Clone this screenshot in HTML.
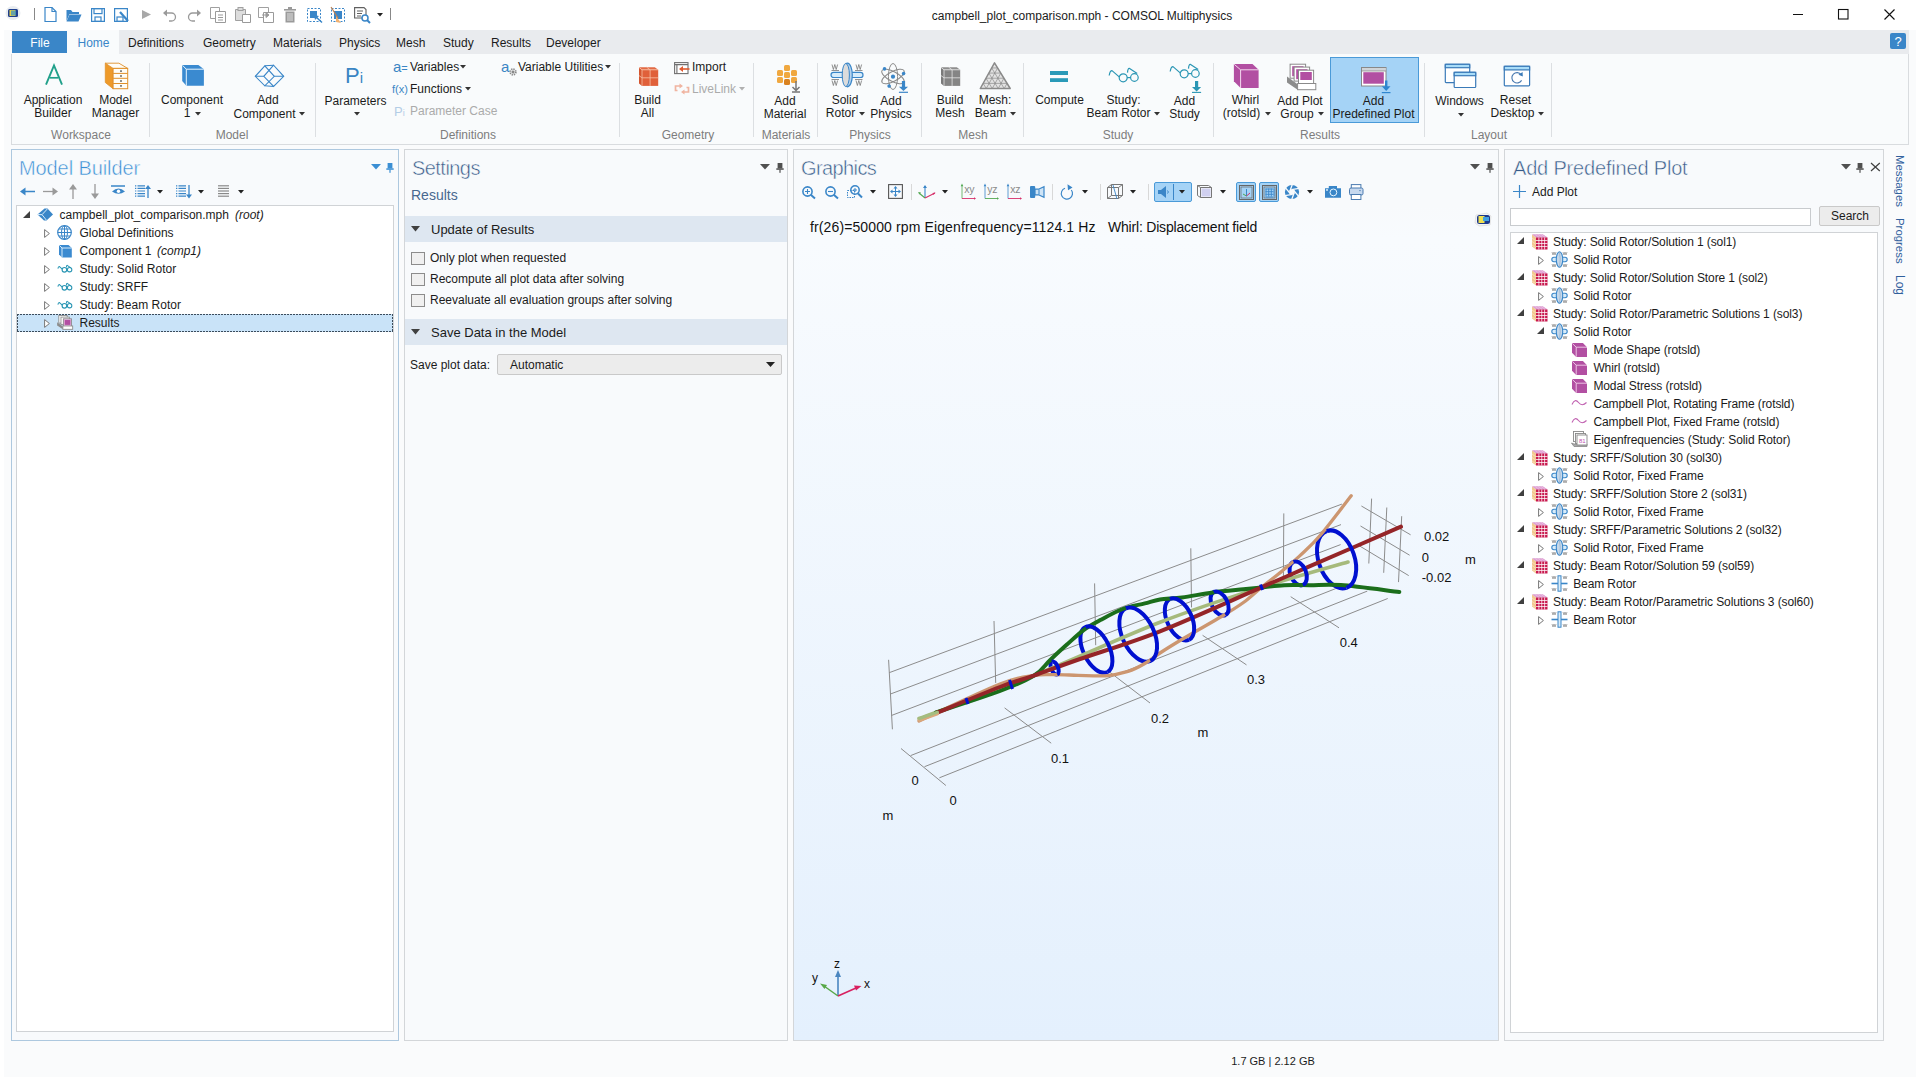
<!DOCTYPE html>
<html><head><meta charset="utf-8"><title>COMSOL</title>
<style>
html,body{margin:0;padding:0;}
body{width:1920px;height:1077px;overflow:hidden;position:relative;background:#fafbfc;font-family:"Liberation Sans",sans-serif;}
.a{position:absolute;}
.t{position:absolute;white-space:nowrap;}
svg{overflow:visible}
</style></head><body>

<div class="a" style="left:0px;top:0px;width:1920px;height:30px;background:#ffffff"></div>
<div class="t" style="left:782px;width:600px;text-align:center;top:8.0px;font-size:12px;line-height:16px;color:#1b1b1b;">campbell_plot_comparison.mph - COMSOL Multiphysics</div>
<svg class="a" style="left:1792px;top:8px" width="12" height="12" viewBox="0 0 12 12"><path d="M1 6.5H11" stroke="#111" stroke-width="1"/></svg>
<svg class="a" style="left:1838px;top:9px" width="12" height="12" viewBox="0 0 12 12"><rect x="0.5" y="0.5" width="9.5" height="9.5" fill="none" stroke="#111" stroke-width="1.1"/></svg>
<svg class="a" style="left:1883.5px;top:8.5px" width="12" height="12" viewBox="0 0 12 12"><path d="M0.5 0.5L10.5 10.5M10.5 0.5L0.5 10.5" stroke="#111" stroke-width="1.15"/></svg>
<div class="a" style="left:0px;top:27px;width:4px;height:1050px;background:#ffffff"></div>
<div class="a" style="left:1916px;top:27px;width:4px;height:1050px;background:#ffffff"></div>
<div class="a" style="left:119px;top:30px;width:1790px;height:24px;background:#e9ebee"></div>
<div class="a" style="left:12px;top:31px;width:55px;height:22px;background:#3a86c8"></div>
<div class="t" style="left:-260px;width:600px;text-align:center;top:34.5px;font-size:12px;line-height:16px;color:#ffffff;">File</div>
<div class="a" style="left:67px;top:31px;width:52px;height:23px;background:#f9fbfc"></div>
<div class="t" style="left:-206.5px;width:600px;text-align:center;top:35.0px;font-size:12px;line-height:16px;color:#3a86c8;">Home</div>
<div class="t" style="left:128px;top:35.0px;font-size:12px;line-height:16px;color:#1b1b1b;">Definitions</div>
<div class="t" style="left:203px;top:35.0px;font-size:12px;line-height:16px;color:#1b1b1b;">Geometry</div>
<div class="t" style="left:273px;top:35.0px;font-size:12px;line-height:16px;color:#1b1b1b;">Materials</div>
<div class="t" style="left:339px;top:35.0px;font-size:12px;line-height:16px;color:#1b1b1b;">Physics</div>
<div class="t" style="left:396px;top:35.0px;font-size:12px;line-height:16px;color:#1b1b1b;">Mesh</div>
<div class="t" style="left:443px;top:35.0px;font-size:12px;line-height:16px;color:#1b1b1b;">Study</div>
<div class="t" style="left:491px;top:35.0px;font-size:12px;line-height:16px;color:#1b1b1b;">Results</div>
<div class="t" style="left:546px;top:35.0px;font-size:12px;line-height:16px;color:#1b1b1b;">Developer</div>
<div class="a" style="left:1890px;top:33px;width:16px;height:16px;background:#3a86c8;border-radius:2px"></div>
<div class="t" style="left:1598px;width:600px;text-align:center;top:32.5px;font-size:13px;line-height:17px;color:#ffffff;">?</div>
<div class="a" style="left:11px;top:54px;width:1898px;height:91px;background:#f9fbfc;border:1px solid #d9dcdf;border-top:none;box-sizing:border-box"></div>
<div class="a" style="left:149px;top:63px;width:1px;height:74px;background:#dcdfe2"></div>
<div class="a" style="left:315px;top:63px;width:1px;height:74px;background:#dcdfe2"></div>
<div class="a" style="left:619px;top:63px;width:1px;height:74px;background:#dcdfe2"></div>
<div class="a" style="left:753px;top:63px;width:1px;height:74px;background:#dcdfe2"></div>
<div class="a" style="left:817px;top:63px;width:1px;height:74px;background:#dcdfe2"></div>
<div class="a" style="left:921px;top:63px;width:1px;height:74px;background:#dcdfe2"></div>
<div class="a" style="left:1023px;top:63px;width:1px;height:74px;background:#dcdfe2"></div>
<div class="a" style="left:1213px;top:63px;width:1px;height:74px;background:#dcdfe2"></div>
<div class="a" style="left:1424px;top:63px;width:1px;height:74px;background:#dcdfe2"></div>
<div class="a" style="left:1551px;top:63px;width:1px;height:74px;background:#dcdfe2"></div>
<div class="t" style="left:-219px;width:600px;text-align:center;top:127.0px;font-size:12px;line-height:16px;color:#7d7d7d;">Workspace</div>
<div class="t" style="left:-68px;width:600px;text-align:center;top:127.0px;font-size:12px;line-height:16px;color:#7d7d7d;">Model</div>
<div class="t" style="left:168px;width:600px;text-align:center;top:127.0px;font-size:12px;line-height:16px;color:#7d7d7d;">Definitions</div>
<div class="t" style="left:388px;width:600px;text-align:center;top:127.0px;font-size:12px;line-height:16px;color:#7d7d7d;">Geometry</div>
<div class="t" style="left:486px;width:600px;text-align:center;top:127.0px;font-size:12px;line-height:16px;color:#7d7d7d;">Materials</div>
<div class="t" style="left:570px;width:600px;text-align:center;top:127.0px;font-size:12px;line-height:16px;color:#7d7d7d;">Physics</div>
<div class="t" style="left:673px;width:600px;text-align:center;top:127.0px;font-size:12px;line-height:16px;color:#7d7d7d;">Mesh</div>
<div class="t" style="left:818px;width:600px;text-align:center;top:127.0px;font-size:12px;line-height:16px;color:#7d7d7d;">Study</div>
<div class="t" style="left:1020px;width:600px;text-align:center;top:127.0px;font-size:12px;line-height:16px;color:#7d7d7d;">Results</div>
<div class="t" style="left:1189px;width:600px;text-align:center;top:127.0px;font-size:12px;line-height:16px;color:#7d7d7d;">Layout</div>
<div class="a" style="left:11px;top:149px;width:388px;height:892px;background:#f8fafc;border:1px solid #adc8df;box-sizing:border-box"></div>
<div class="a" style="left:404px;top:149px;width:384px;height:892px;background:#f8fafc;border:1px solid #d3d6d9;box-sizing:border-box"></div>
<div class="a" style="left:793px;top:149px;width:706px;height:892px;background:#f8fafc;border:1px solid #d3d6d9;box-sizing:border-box"></div>
<div class="a" style="left:1504px;top:149px;width:380px;height:892px;background:#f8fafc;border:1px solid #d3d6d9;box-sizing:border-box"></div>
<div class="t" style="left:973px;width:600px;text-align:center;top:1053.5px;font-size:11px;line-height:15px;color:#1b1b1b;">1.7 GB | 2.12 GB</div>
<svg class="a" style="left:5px;top:5px" width="16" height="16" viewBox="0 0 16 16"><ellipse cx="8" cy="8" rx="7.5" ry="7" fill="#e8ecf0"/><rect x="3" y="4" width="10" height="8" rx="1.5" fill="#1f3f8f"/><rect x="4.5" y="5" width="6" height="6" fill="#e8d040"/><rect x="6" y="5.5" width="5" height="5" fill="#3090d0" opacity="0.7"/></svg>
<div class="a" style="left:34px;top:8px;width:1px;height:12px;background:#888"></div>
<svg class="a" style="left:44px;top:7px" width="13" height="15" viewBox="0 0 13 15"><path d="M1 0.5H8L12 4.5V14.5H1Z" fill="#fff" stroke="#3a86c8" stroke-width="1.2"/><path d="M8 0.5V4.5H12" fill="none" stroke="#3a86c8" stroke-width="1.2"/></svg>
<svg class="a" style="left:66px;top:9px" width="16" height="13" viewBox="0 0 16 13"><path d="M0.5 1H5L6.5 3H13V5H3.5L0.5 12Z" fill="#3a86c8"/><path d="M3.5 5.5H15.5L12.5 12.5H0.5Z" fill="#3a86c8"/></svg>
<svg class="a" style="left:91px;top:8px" width="14" height="14" viewBox="0 0 14 14"><path d="M0.6 0.6H13.4V13.4H0.6Z" fill="none" stroke="#3a86c8" stroke-width="1.2"/><rect x="3" y="0.6" width="8" height="5" fill="none" stroke="#3a86c8" stroke-width="1.2"/><rect x="4" y="9" width="6" height="4.4" fill="none" stroke="#3a86c8" stroke-width="1.2"/></svg>
<svg class="a" style="left:114px;top:8px" width="16" height="15" viewBox="0 0 16 15"><path d="M0.6 0.6H13.4V13.4H0.6Z" fill="none" stroke="#3a86c8" stroke-width="1.2"/><rect x="3" y="9" width="6" height="4.4" fill="none" stroke="#3a86c8" stroke-width="1.2"/><path d="M6 4L14 13" stroke="#3a86c8" stroke-width="2.2"/></svg>
<svg class="a" style="left:142px;top:10px" width="10" height="9" viewBox="0 0 10 9"><path d="M0 0L9 4.5L0 9Z" fill="#a8a8a8"/></svg>
<svg class="a" style="left:163px;top:9px" width="14" height="13" viewBox="0 0 14 13"><path d="M2 4H8.5A4 4 0 0 1 8.5 12H6" fill="none" stroke="#9a9a9a" stroke-width="1.3"/><path d="M0 4L4 0.5V7.5Z" fill="#9a9a9a"/></svg>
<svg class="a" style="left:187px;top:9px" width="14" height="13" viewBox="0 0 14 13"><path d="M12 4H5.5A4 4 0 0 0 5.5 12H8" fill="none" stroke="#9a9a9a" stroke-width="1.3"/><path d="M14 4L10 0.5V7.5Z" fill="#9a9a9a"/></svg>
<svg class="a" style="left:210px;top:7px" width="16" height="16" viewBox="0 0 16 16"><path d="M0.5 0.5H9.5V11.5H0.5Z" fill="#fff" stroke="#a0a0a0"/><path d="M5.5 4.5H15.5V15.5H5.5Z" fill="#fff" stroke="#9a9a9a"/><path d="M8 8H13M8 10.5H13M8 13H13" stroke="#9a9a9a"/></svg>
<svg class="a" style="left:235px;top:7px" width="16" height="16" viewBox="0 0 16 16"><path d="M0.5 2.5H10.5V13.5H0.5Z" fill="#ddd" stroke="#a0a0a0"/><rect x="3" y="0.5" width="5" height="3" fill="#ddd" stroke="#a0a0a0"/><path d="M7.5 7.5H15.5V15.5H7.5Z" fill="#fff" stroke="#9a9a9a"/></svg>
<svg class="a" style="left:258px;top:7px" width="16" height="16" viewBox="0 0 16 16"><path d="M0.5 0.5H10.5V10.5H0.5Z" fill="#fff" stroke="#a0a0a0"/><path d="M5.5 5.5H15.5V15.5H5.5Z" fill="#fff" stroke="#9a9a9a"/><path d="M4 8H10M8 5.5L11 8L8 10.5Z" stroke="#9a9a9a" fill="#9a9a9a"/></svg>
<svg class="a" style="left:284px;top:7px" width="12" height="16" viewBox="0 0 12 16"><rect x="0" y="2" width="12" height="1.6" fill="#9a9a9a"/><rect x="4" y="0" width="4" height="2" fill="#9a9a9a"/><path d="M1.5 4.5H10.5V15.5H1.5Z" fill="#9a9a9a"/><path d="M4 6V14M6 6V14M8 6V14" stroke="#e8e8e8" stroke-width="0.9"/></svg>
<svg class="a" style="left:307px;top:8px" width="16" height="15" viewBox="0 0 16 15"><rect x="0.5" y="0.5" width="13" height="13" fill="none" stroke="#3a86c8" stroke-dasharray="2 1.5"/><rect x="3" y="3" width="7" height="7" fill="#3a86c8"/><path d="M8 8L15 14.5" stroke="#3a86c8" stroke-width="1.5"/><path d="M7 7L12 8L8 12Z" fill="#3a86c8"/></svg>
<svg class="a" style="left:330px;top:7px" width="16" height="16" viewBox="0 0 16 16"><rect x="1.5" y="1.5" width="13" height="13" fill="none" stroke="#3a86c8" stroke-dasharray="2 1.5"/><rect x="4" y="4" width="8" height="8" fill="#3a86c8"/><path d="M1 0L8 11" stroke="#c08050" stroke-width="1.2"/><path d="M6 9L11 16L6 15Z" fill="#f0b070"/></svg>
<svg class="a" style="left:354px;top:7px" width="17" height="17" viewBox="0 0 17 17"><path d="M0.6 0.6H10L12 2.6V11H0.6Z" fill="#fff" stroke="#606060" stroke-width="1.1"/><path d="M3 4H9M3 6.5H8M3 9H7" stroke="#606060"/><circle cx="11" cy="11" r="3" fill="#fff" stroke="#3a86c8" stroke-width="1.5"/><path d="M13 13L16 16" stroke="#3a86c8" stroke-width="2"/></svg>
<svg class="a" style="left:376.5px;top:13px" width="6" height="4" viewBox="0 0 6 4"><path d="M0 0H6L3 3.5Z" fill="#222"/></svg>
<div class="a" style="left:390px;top:8px;width:1px;height:12px;background:#888"></div>
<svg class="a" style="left:44px;top:64px" width="20" height="22" viewBox="0 0 20 22"><path d="M2 20.6L10 1.5L18 20.6" fill="none" stroke="#21a08a" stroke-width="1.9"/><path d="M5.8 13.8H14.2" stroke="#21a08a" stroke-width="1.7"/></svg>
<div class="t" style="left:-247px;width:600px;text-align:center;top:92.0px;font-size:12px;line-height:16px;color:#1b1b1b;">Application</div>
<div class="t" style="left:-247px;width:600px;text-align:center;top:105.0px;font-size:12px;line-height:16px;color:#1b1b1b;">Builder</div>
<svg class="a" style="left:104px;top:62px" width="25" height="28" viewBox="0 0 25 28"><path d="M1.3 1.2L9.1 6.4V26.7L1.3 20.5Z" fill="#ee9a2a" stroke="#e0902a" stroke-width="0.8"/><path d="M1.3 1.2H14.9L23.7 6.4H9.1Z" fill="#fffdf6" stroke="#e0902a" stroke-width="0.9"/><rect x="9.1" y="6.4" width="14.6" height="20.3" fill="#fffdf6" stroke="#e0902a" stroke-width="1"/><path d="M9.1 11.4H23.7M9.1 16.3H23.7M9.1 21.5H23.7" stroke="#e0902a" stroke-width="1"/><g fill="#555"><rect x="16.2" y="8.3" width="1.6" height="1.6"/><rect x="16.2" y="13.2" width="1.6" height="1.6"/><rect x="16.2" y="18.2" width="1.6" height="1.6"/><rect x="16.2" y="23.1" width="1.6" height="1.6"/></g></svg>
<div class="t" style="left:-184.5px;width:600px;text-align:center;top:92.0px;font-size:12px;line-height:16px;color:#1b1b1b;">Model</div>
<div class="t" style="left:-184.5px;width:600px;text-align:center;top:105.0px;font-size:12px;line-height:16px;color:#1b1b1b;">Manager</div>
<svg class="a" style="left:181px;top:64px" width="24" height="23" viewBox="0 0 24 23"><path d="M1.2 1H17.4L22.9 5.2V21.8H5.3L1.2 17.1Z" fill="#3a8ad0"/><path d="M1.6 1.4L5.3 5.2H22.9M5.3 5.2V21.8" fill="none" stroke="#e8f6ff" stroke-width="1"/></svg>
<div class="t" style="left:-108px;width:600px;text-align:center;top:92.0px;font-size:12px;line-height:16px;color:#1b1b1b;">Component</div>
<div class="t" style="left:-113px;width:600px;text-align:center;top:105.0px;font-size:12px;line-height:16px;color:#1b1b1b;">1</div>
<svg class="a" style="left:195px;top:112px" width="6" height="4" viewBox="0 0 6 4"><path d="M0 0H6L3 3.5Z" fill="#333"/></svg>
<svg class="a" style="left:254px;top:64px" width="31" height="24" viewBox="0 0 31 24"><g fill="none" stroke="#3a86c8" stroke-width="1.1"><path d="M10.8 1.8L1.3 12.3L10.8 21.8L20.3 12.3Z"/><path d="M19.6 1.2L9.8 12.3L19.6 22.5L29.7 12.3Z"/><path d="M10.8 1.8L19.6 1.2M1.3 12.3L9.8 12.3M20.3 12.3L29.7 12.3M10.8 21.8L19.6 22.5"/></g></svg>
<div class="t" style="left:-32px;width:600px;text-align:center;top:92.0px;font-size:12px;line-height:16px;color:#1b1b1b;">Add</div>
<div class="t" style="left:-35.5px;width:600px;text-align:center;top:105.5px;font-size:12px;line-height:16px;color:#1b1b1b;">Component</div>
<svg class="a" style="left:299px;top:112px" width="6" height="4" viewBox="0 0 6 4"><path d="M0 0H6L3 3.5Z" fill="#333"/></svg>
<div class="t" style="left:54px;width:600px;text-align:center;top:63.0px;font-size:22px;line-height:26px;color:#3a85c4;">P<span style="font-size:15px">i</span></div>
<div class="t" style="left:55.5px;width:600px;text-align:center;top:92.5px;font-size:12px;line-height:16px;color:#1b1b1b;">Parameters</div>
<svg class="a" style="left:353.5px;top:112px" width="6" height="4" viewBox="0 0 6 4"><path d="M0 0H6L3 3.5Z" fill="#333"/></svg>
<div class="t" style="left:393px;top:56.5px;font-size:15px;line-height:19px;color:#3a85c4;">a<span style='font-size:11px'>=</span></div>
<div class="t" style="left:410px;top:58.5px;font-size:12px;line-height:16px;color:#1b1b1b;">Variables</div>
<svg class="a" style="left:459.5px;top:65px" width="6" height="4" viewBox="0 0 6 4"><path d="M0 0H6L3 3.5Z" fill="#333"/></svg>
<div class="t" style="left:392px;top:82.0px;font-size:11px;line-height:15px;color:#3a85c4;">f(x)</div>
<div class="t" style="left:410px;top:81.0px;font-size:12px;line-height:16px;color:#1b1b1b;">Functions</div>
<svg class="a" style="left:465px;top:87px" width="6" height="4" viewBox="0 0 6 4"><path d="M0 0H6L3 3.5Z" fill="#333"/></svg>
<div class="t" style="left:394px;top:102.5px;font-size:13px;line-height:17px;color:#b4cde6;">P<span style='font-size:9px'>i</span></div>
<div class="t" style="left:410px;top:103.0px;font-size:12px;line-height:16px;color:#ababab;">Parameter Case</div>
<div class="t" style="left:501px;top:56.5px;font-size:15px;line-height:19px;color:#3a85c4;">a</div>
<svg class="a" style="left:509px;top:68px" width="8" height="8" viewBox="0 0 8 8"><circle cx="4" cy="4" r="2.8" fill="none" stroke="#888" stroke-width="1.8" stroke-dasharray="1.3 0.9"/><circle cx="4" cy="4" r="1.5" fill="#888"/></svg>
<div class="t" style="left:518px;top:58.5px;font-size:12px;line-height:16px;color:#1b1b1b;">Variable Utilities</div>
<svg class="a" style="left:604.5px;top:65px" width="6" height="4" viewBox="0 0 6 4"><path d="M0 0H6L3 3.5Z" fill="#333"/></svg>
<svg class="a" style="left:638px;top:66px" width="21" height="21" viewBox="0 0 21 21"><path d="M1 1.6L4 3.8V19.9L1 17.4Z" fill="#d4552f"/><path d="M1 1.2H16.8L20.2 3.8H4Z" fill="#e26a44"/><rect x="4" y="3.8" width="16.2" height="16.1" fill="#e0603a"/><path d="M4 3.8H20.2M4 3.8V19.9M1 1.4L4 3.8M12.1 3.8V19.9M4 11.8H20.2M1 9.6L4 11.8M8.7 1.2L12.1 3.8" fill="none" stroke="#f8c0a4" stroke-width="0.8"/></svg>
<div class="t" style="left:347.5px;width:600px;text-align:center;top:92.0px;font-size:12px;line-height:16px;color:#1b1b1b;">Build</div>
<div class="t" style="left:347.5px;width:600px;text-align:center;top:105.0px;font-size:12px;line-height:16px;color:#1b1b1b;">All</div>
<svg class="a" style="left:674px;top:62px" width="16" height="12" viewBox="0 0 16 12"><rect x="0.6" y="0.6" width="13.4" height="11" fill="#fff" stroke="#707070" stroke-width="1.1"/><path d="M0.6 2.6H14M2.9 2.6V11.6" stroke="#707070" stroke-width="1.1"/><path d="M15.5 7H8" stroke="#e05a30" stroke-width="1.6"/><path d="M5 7L9 4V10Z" fill="#e05a30"/></svg>
<div class="t" style="left:692px;top:59.0px;font-size:12px;line-height:16px;color:#1b1b1b;">Import</div>
<svg class="a" style="left:674px;top:84px" width="16" height="10" viewBox="0 0 16 10"><path d="M6 2H1.5V6.5H3.5M9.5 8H14.5V3.5H12.5" fill="none" stroke="#f0b4a0" stroke-width="1.7"/><path d="M9 2L5.5 -0.5V4.5ZM7 8L10.5 5.5V10.5Z" fill="#f0b4a0"/></svg>
<div class="t" style="left:692px;top:81.0px;font-size:12px;line-height:16px;color:#ababab;">LiveLink</div>
<svg class="a" style="left:738.5px;top:87px" width="6" height="4" viewBox="0 0 6 4"><path d="M0 0H6L3 3.5Z" fill="#b0b0b0"/></svg>
<svg class="a" style="left:776px;top:65px" width="24" height="28" viewBox="0 0 24 28"><g fill="#f0a840"><rect x="8" y="0" width="6" height="6" rx="1.5"/><rect x="1" y="5" width="6" height="6" rx="1.5"/><rect x="8" y="7" width="6" height="6" rx="1.5"/><rect x="15" y="5" width="6" height="6" rx="1.5"/><rect x="1" y="12" width="6" height="6" rx="1.5"/><rect x="15" y="12" width="6" height="6" rx="1.5"/></g><rect x="8" y="14" width="6" height="6" rx="1.5" fill="#d98220"/><path d="M20 16V25M16.5 22L20 25.5L23.5 22M16 27H24" fill="none" stroke="#777" stroke-width="1.5"/></svg>
<div class="t" style="left:485px;width:600px;text-align:center;top:92.5px;font-size:12px;line-height:16px;color:#1b1b1b;">Add</div>
<div class="t" style="left:485px;width:600px;text-align:center;top:105.5px;font-size:12px;line-height:16px;color:#1b1b1b;">Material</div>
<svg class="a" style="left:830px;top:62px" width="34" height="27" viewBox="0 0 34 27"><g stroke="#777" stroke-width="0.8" fill="none"><path d="M2 2.5L3.4 7.5L4.8 2.5L6.2 7.5L7.6 2.5M26 2.5L27.4 7.5L28.8 2.5L30.2 7.5L31.6 2.5M2 18.5L3.4 23.5L4.8 18.5L6.2 23.5L7.6 18.5M26 18.5L27.4 23.5L28.8 18.5L30.2 23.5L31.6 18.5"/><path d="M1.5 8.5H9M25 8.5H32.5M1.5 17.5H9M25 17.5H32.5"/></g><rect x="1" y="10.3" width="32" height="5.2" rx="2.6" fill="#d8ecfa" stroke="#3a86c8" stroke-width="1.2"/><ellipse cx="17.5" cy="13" rx="4.8" ry="11.8" fill="#b8d4ee" stroke="#3a86c8" stroke-width="1.2"/><ellipse cx="15.8" cy="13" rx="3.6" ry="11.5" fill="#dcdcdc" stroke="#3a86c8" stroke-width="1"/></svg>
<div class="t" style="left:545px;width:600px;text-align:center;top:92.0px;font-size:12px;line-height:16px;color:#1b1b1b;">Solid</div>
<div class="t" style="left:540.5px;width:600px;text-align:center;top:105.0px;font-size:12px;line-height:16px;color:#1b1b1b;">Rotor</div>
<svg class="a" style="left:859px;top:111.5px" width="6" height="4" viewBox="0 0 6 4"><path d="M0 0H6L3 3.5Z" fill="#333"/></svg>
<svg class="a" style="left:879px;top:62px" width="32" height="32" viewBox="0 0 32 32"><g fill="none" stroke="#8a8a8a" stroke-width="1"><ellipse cx="14" cy="14.5" rx="12.5" ry="4.8" transform="rotate(28 14 14.5)"/><ellipse cx="14" cy="14.5" rx="12.5" ry="4.8" transform="rotate(-28 14 14.5)"/><ellipse cx="14" cy="14.5" rx="4.6" ry="13"/></g><g fill="#3a86c8"><circle cx="14" cy="14.7" r="2.1"/><circle cx="5.5" cy="6.9" r="1.8"/><circle cx="24.6" cy="11.6" r="1.8"/><circle cx="10.1" cy="24.1" r="1.8"/></g><path d="M24.5 19V25.5" stroke="#3a86c8" stroke-width="3.2"/><path d="M19.9 24.8H29L24.45 29Z" fill="#3a86c8"/><path d="M19.9 30.3H29" stroke="#3a86c8" stroke-width="1.2"/></svg>
<div class="t" style="left:591px;width:600px;text-align:center;top:92.5px;font-size:12px;line-height:16px;color:#1b1b1b;">Add</div>
<div class="t" style="left:591px;width:600px;text-align:center;top:105.5px;font-size:12px;line-height:16px;color:#1b1b1b;">Physics</div>
<svg class="a" style="left:940px;top:66px" width="21" height="21" viewBox="0 0 21 21"><path d="M1 1.6L4 3.8V19.9L1 17.4Z" fill="#7a7a7a"/><path d="M1 1.2H16.8L20.2 3.8H4Z" fill="#8e8e8e"/><rect x="4" y="3.8" width="16.2" height="16.1" fill="#858585"/><path d="M4 3.8H20.2M4 3.8V19.9M1 1.4L4 3.8M12.1 3.8V19.9M4 11.8H20.2M1 9.6L4 11.8M8.7 1.2L12.1 3.8" fill="none" stroke="#e4e4e4" stroke-width="0.8"/></svg>
<div class="t" style="left:650px;width:600px;text-align:center;top:92.0px;font-size:12px;line-height:16px;color:#1b1b1b;">Build</div>
<div class="t" style="left:650px;width:600px;text-align:center;top:105.0px;font-size:12px;line-height:16px;color:#1b1b1b;">Mesh</div>
<svg class="a" style="left:979px;top:62px" width="33" height="28" viewBox="0 0 33 28"><path d="M15.5 0.8L31.2 26.5H1.3Z" fill="#e2e2e2"/><path d="M12.66 5.94L18.64 5.94M7.28 26.50L18.64 5.94M25.22 26.50L12.66 5.94M9.82 11.08L21.78 11.08M13.26 26.50L21.78 11.08M19.24 26.50L9.82 11.08M6.98 16.22L24.92 16.22M19.24 26.50L24.92 16.22M13.26 26.50L6.98 16.22M4.14 21.36L28.06 21.36M25.22 26.50L28.06 21.36M7.28 26.50L4.14 21.36" stroke="#8a8a8a" stroke-width="0.7" fill="none"/><path d="M15.5 0.8L31.2 26.5H1.3Z" fill="none" stroke="#8a8a8a" stroke-width="1.5" stroke-linejoin="round"/></svg>
<div class="t" style="left:695px;width:600px;text-align:center;top:92.0px;font-size:12px;line-height:16px;color:#1b1b1b;">Mesh:</div>
<div class="t" style="left:690.5px;width:600px;text-align:center;top:105.0px;font-size:12px;line-height:16px;color:#1b1b1b;">Beam</div>
<svg class="a" style="left:1009.5px;top:111.5px" width="6" height="4" viewBox="0 0 6 4"><path d="M0 0H6L3 3.5Z" fill="#333"/></svg>
<svg class="a" style="left:1050px;top:71px" width="18" height="11" viewBox="0 0 18 11"><rect x="0" y="0" width="18" height="4" fill="#2a9ab8"/><rect x="0" y="7.2" width="18" height="3.8" fill="#2a9ab8"/></svg>
<div class="t" style="left:759.5px;width:600px;text-align:center;top:92.0px;font-size:12px;line-height:16px;color:#1b1b1b;">Compute</div>
<svg class="a" style="left:1108px;top:66px" width="31" height="17" viewBox="0 0 31 17"><g fill="none" stroke="#2a96b4" stroke-width="1.2" stroke-linejoin="round"><path d="M1.2 9.5Q2 4.6 4 4.6L11.2 10.9"/><circle cx="15.2" cy="11.8" r="4"/><circle cx="26.4" cy="11.5" r="3.8"/><path d="M19.1 11.6H22.6"/><path d="M19.5 6.6Q19.8 2.3 21.2 2.3L29.2 7.6"/></g></svg>
<div class="t" style="left:823.5px;width:600px;text-align:center;top:92.0px;font-size:12px;line-height:16px;color:#1b1b1b;">Study:</div>
<div class="t" style="left:818.5px;width:600px;text-align:center;top:105.0px;font-size:12px;line-height:16px;color:#1b1b1b;">Beam Rotor</div>
<svg class="a" style="left:1153.5px;top:111.5px" width="6" height="4" viewBox="0 0 6 4"><path d="M0 0H6L3 3.5Z" fill="#333"/></svg>
<svg class="a" style="left:1169px;top:62px" width="31" height="17" viewBox="0 0 31 17"><g fill="none" stroke="#2a96b4" stroke-width="1.2" stroke-linejoin="round"><path d="M1.2 9.5Q2 4.6 4 4.6L11.2 10.9"/><circle cx="15.2" cy="11.8" r="4"/><circle cx="26.4" cy="11.5" r="3.8"/><path d="M19.1 11.6H22.6"/><path d="M19.5 6.6Q19.8 2.3 21.2 2.3L29.2 7.6"/></g></svg>
<svg class="a" style="left:1191px;top:80px" width="11" height="13" viewBox="0 0 11 13"><path d="M5.6 1V7.5" stroke="#2a96b4" stroke-width="3.2"/><path d="M1 7H10.1L5.6 11.4Z" fill="#2a96b4"/><path d="M1 12.4H10.1" stroke="#2a96b4" stroke-width="1.1"/></svg>
<div class="t" style="left:884.5px;width:600px;text-align:center;top:92.5px;font-size:12px;line-height:16px;color:#1b1b1b;">Add</div>
<div class="t" style="left:884.5px;width:600px;text-align:center;top:105.5px;font-size:12px;line-height:16px;color:#1b1b1b;">Study</div>
<svg class="a" style="left:1233px;top:63px" width="27" height="26" viewBox="0 0 27 26"><path d="M0.9 1H19.5L25.6 6.8V25H7.6L0.9 18.2Z" fill="#b24fa2"/><path d="M1.2 1.3L7.6 6.8H25.6M7.6 6.8V25" fill="none" stroke="#fbe8f6" stroke-width="0.9"/></svg>
<div class="t" style="left:945.5px;width:600px;text-align:center;top:92.0px;font-size:12px;line-height:16px;color:#1b1b1b;">Whirl</div>
<div class="t" style="left:941.5px;width:600px;text-align:center;top:105.0px;font-size:12px;line-height:16px;color:#1b1b1b;">(rotsld)</div>
<svg class="a" style="left:1264.5px;top:112px" width="6" height="4" viewBox="0 0 6 4"><path d="M0 0H6L3 3.5Z" fill="#333"/></svg>
<svg class="a" style="left:1286px;top:63px" width="31" height="28" viewBox="0 0 31 28"><path d="M1 13.4L11.6 21.3V26.7L1 19.6Z" fill="#8c8c8c"/><rect x="4.1" y="1.2" width="15.5" height="14" fill="#fff" stroke="#8a8a8a" stroke-width="1"/><rect x="6.2" y="3.2" width="11.3" height="10" fill="#b24fa2"/><rect x="8.1" y="4.1" width="15.5" height="14" fill="#fff" stroke="#8a8a8a" stroke-width="1"/><rect x="10.2" y="6.2" width="11.3" height="10" fill="#b24fa2"/><rect x="12.5" y="7.2" width="15.1" height="14.2" fill="#fff" stroke="#8a8a8a" stroke-width="1"/><rect x="14.3" y="9" width="11.5" height="8" fill="#b24fa2"/><rect x="11.6" y="20.5" width="18.2" height="6.2" fill="#fff" stroke="#8a8a8a" stroke-width="1"/></svg>
<div class="t" style="left:1000px;width:600px;text-align:center;top:92.5px;font-size:12px;line-height:16px;color:#1b1b1b;">Add Plot</div>
<div class="t" style="left:997px;width:600px;text-align:center;top:105.5px;font-size:12px;line-height:16px;color:#1b1b1b;">Group</div>
<svg class="a" style="left:1317.5px;top:112px" width="6" height="4" viewBox="0 0 6 4"><path d="M0 0H6L3 3.5Z" fill="#333"/></svg>
<div class="a" style="left:1330px;top:57px;width:89px;height:66px;background:#a5d3f6;border:1px solid #4a9ad8;box-sizing:border-box"></div>
<svg class="a" style="left:1360px;top:66px" width="31" height="28" viewBox="0 0 31 28"><rect x="1.5" y="1.5" width="24.5" height="18.5" fill="#fff" stroke="#888" stroke-width="1"/><rect x="2" y="2" width="23.5" height="3" fill="#d0d4d8"/><path d="M1.5 5H26" stroke="#888" stroke-width="0.8"/><rect x="3.3" y="6.2" width="20.5" height="11.5" fill="#b24fa2"/><path d="M26.2 14.5V21.5" stroke="#2f86cf" stroke-width="2.4"/><path d="M21.8 20.2H30.5L26.2 25Z" fill="#2f86cf"/><path d="M21.8 26.6H30.5" stroke="#2f86cf" stroke-width="1.2"/></svg>
<div class="t" style="left:1073.5px;width:600px;text-align:center;top:92.5px;font-size:12px;line-height:16px;color:#1b1b1b;">Add</div>
<div class="t" style="left:1073.5px;width:600px;text-align:center;top:105.5px;font-size:12px;line-height:16px;color:#1b1b1b;">Predefined Plot</div>
<svg class="a" style="left:1444px;top:63px" width="33" height="26" viewBox="0 0 33 26"><g stroke="#3a7ab8" stroke-width="1.2"><rect x="1.3" y="1.3" width="24.4" height="18.3" rx="0.8" fill="#fff"/><rect x="1.3" y="1.3" width="24.4" height="3.4" fill="#a8dcf8"/><rect x="10.2" y="9.3" width="21.5" height="15.2" rx="0.8" fill="#fff"/><rect x="10.2" y="9.3" width="21.5" height="3.4" fill="#a8dcf8"/></g></svg>
<div class="t" style="left:1159.5px;width:600px;text-align:center;top:93.0px;font-size:12px;line-height:16px;color:#1b1b1b;">Windows</div>
<svg class="a" style="left:1457.5px;top:113px" width="6" height="4" viewBox="0 0 6 4"><path d="M0 0H6L3 3.5Z" fill="#333"/></svg>
<svg class="a" style="left:1503px;top:65px" width="28" height="23" viewBox="0 0 28 23"><g stroke="#3a7ab8" stroke-width="1.2"><rect x="1.3" y="1.3" width="25.3" height="19.5" rx="0.8" fill="#fff"/><rect x="1.3" y="1.3" width="25.3" height="3.6" fill="#a8dcf8"/></g><path d="M18.2 9.6A5.2 5.2 0 1 0 18.6 15.4" fill="none" stroke="#4a7ab0" stroke-width="1.1"/><path d="M15.5 9.8L19.6 6.9L19.8 11.6Z" fill="#3a7ab8"/></svg>
<div class="t" style="left:1215.5px;width:600px;text-align:center;top:92.0px;font-size:12px;line-height:16px;color:#1b1b1b;">Reset</div>
<div class="t" style="left:1212.5px;width:600px;text-align:center;top:105.0px;font-size:12px;line-height:16px;color:#1b1b1b;">Desktop</div>
<svg class="a" style="left:1537.5px;top:111.5px" width="6" height="4" viewBox="0 0 6 4"><path d="M0 0H6L3 3.5Z" fill="#333"/></svg>
<div class="t" style="left:19px;top:156.0px;font-size:20px;line-height:24px;color:#3b8fd4;letter-spacing:-0.1px;-webkit-text-stroke:0.5px #f8fafc">Model Builder</div>
<svg class="a" style="left:371px;top:164px" width="10" height="6" viewBox="0 0 10 6"><path d="M0 0H10L5 5.5Z" fill="#3b8fd4"/></svg>
<svg class="a" style="left:386px;top:161px" width="8" height="12" viewBox="0 0 8 12"><rect x="1.6" y="2" width="4.8" height="5.5" fill="#3b8fd4"/><rect x="0.3" y="7.3" width="7.4" height="1.5" fill="#3b8fd4"/><rect x="3.4" y="8.5" width="1.2" height="3.3" fill="#3b8fd4"/></svg>
<svg class="a" style="left:20px;top:186px" width="15" height="11" viewBox="0 0 15 11"><path d="M3 5.5H15" stroke="#3a86c8" stroke-width="1.5"/><path d="M0 5.5L5.5 1.5V9.5Z" fill="#3a86c8"/></svg>
<svg class="a" style="left:43px;top:186px" width="15" height="11" viewBox="0 0 15 11"><path d="M0 5.5H12" stroke="#9a9a9a" stroke-width="1.3"/><path d="M15 5.5L9.5 1.5V9.5Z" fill="#9a9a9a"/></svg>
<svg class="a" style="left:68px;top:184px" width="10" height="15" viewBox="0 0 10 15"><path d="M5 3V15" stroke="#9a9a9a" stroke-width="1.3"/><path d="M5 0L1 5.5H9Z" fill="#9a9a9a"/></svg>
<svg class="a" style="left:90px;top:184px" width="10" height="15" viewBox="0 0 10 15"><path d="M5 0V12" stroke="#9a9a9a" stroke-width="1.3"/><path d="M5 15L1 9.5H9Z" fill="#9a9a9a"/></svg>
<svg class="a" style="left:111px;top:185px" width="15" height="11" viewBox="0 0 15 11"><path d="M0 1H14" stroke="#3a86c8" stroke-width="1.5"/><path d="M1 6.5Q7.5 0.5 14 6.5Q7.5 11 1 6.5Z" fill="#3a86c8"/><circle cx="7.5" cy="6.3" r="1.7" fill="#fff"/></svg>
<svg class="a" style="left:134.5px;top:185px" width="16" height="14" viewBox="0 0 16 14"><path d="M0 0.8H1.3M2.5 0.8H10" stroke="#3a86c8" stroke-width="1.2"/><path d="M0 3.4000000000000004H1.3M2.5 3.4000000000000004H10" stroke="#3a86c8" stroke-width="1.2"/><path d="M0 6.0H1.3M2.5 6.0H10" stroke="#3a86c8" stroke-width="1.2"/><path d="M0 8.600000000000001H1.3M2.5 8.600000000000001H10" stroke="#3a86c8" stroke-width="1.2"/><path d="M0 11.200000000000001H1.3M2.5 11.200000000000001H10" stroke="#3a86c8" stroke-width="1.2"/><path d="M13 3V13" stroke="#3a86c8" stroke-width="1.3"/><path d="M13 0L10 4H16Z" fill="#3a86c8"/></svg>
<svg class="a" style="left:157px;top:189.5px" width="6" height="4" viewBox="0 0 6 4"><path d="M0 0H6L3 3.5Z" fill="#222"/></svg>
<svg class="a" style="left:175.5px;top:185px" width="16" height="14" viewBox="0 0 16 14"><path d="M0 0.8H1.3M2.5 0.8H10" stroke="#3a86c8" stroke-width="1.2"/><path d="M0 3.4000000000000004H1.3M2.5 3.4000000000000004H10" stroke="#3a86c8" stroke-width="1.2"/><path d="M0 6.0H1.3M2.5 6.0H10" stroke="#3a86c8" stroke-width="1.2"/><path d="M0 8.600000000000001H1.3M2.5 8.600000000000001H10" stroke="#3a86c8" stroke-width="1.2"/><path d="M0 11.200000000000001H1.3M2.5 11.200000000000001H10" stroke="#3a86c8" stroke-width="1.2"/><path d="M13 0V10" stroke="#3a86c8" stroke-width="1.3"/><path d="M13 13.5L10 9.5H16Z" fill="#3a86c8"/></svg>
<svg class="a" style="left:198px;top:189.5px" width="6" height="4" viewBox="0 0 6 4"><path d="M0 0H6L3 3.5Z" fill="#222"/></svg>
<svg class="a" style="left:218px;top:185px" width="12" height="14" viewBox="0 0 12 14"><path d="M0 0.8H11" stroke="#8a8a8a" stroke-width="1.2"/><path d="M0 3.4000000000000004H11" stroke="#8a8a8a" stroke-width="1.2"/><path d="M0 6.0H11" stroke="#8a8a8a" stroke-width="1.2"/><path d="M0 8.600000000000001H11" stroke="#8a8a8a" stroke-width="1.2"/><path d="M0 11.200000000000001H11" stroke="#8a8a8a" stroke-width="1.2"/></svg>
<svg class="a" style="left:238px;top:189.5px" width="6" height="4" viewBox="0 0 6 4"><path d="M0 0H6L3 3.5Z" fill="#222"/></svg>
<div class="a" style="left:16px;top:205px;width:378px;height:827px;background:#ffffff;border:1px solid #d0d3d6;box-sizing:border-box"></div>
<div class="a" style="left:17px;top:314px;width:376px;height:18px;background:#c9e3f8"></div>
<div class="a" style="left:17px;top:314px;width:376px;height:1px;background:repeating-linear-gradient(to right,#3c4c5c 0 2px,transparent 2px 3px)"></div>
<div class="a" style="left:17px;top:331px;width:376px;height:1px;background:repeating-linear-gradient(to right,#3c4c5c 0 2px,transparent 2px 3px)"></div>
<div class="a" style="left:17px;top:314px;width:1px;height:18px;background:repeating-linear-gradient(to bottom,#3c4c5c 0 2px,transparent 2px 3px)"></div>
<div class="a" style="left:392px;top:314px;width:1px;height:18px;background:repeating-linear-gradient(to bottom,#3c4c5c 0 2px,transparent 2px 3px)"></div>
<svg class="a" style="left:23px;top:210.5px" width="7" height="7" viewBox="0 0 7 7"><path d="M7 0V7H0Z" fill="#404040"/></svg>
<svg class="a" style="left:37px;top:208px" width="17" height="13" viewBox="0 0 17 13"><path d="M0.5 6.5L7.5 0.5H10.5L16 6.5L9.5 12.5H7Z" fill="#3a86c8"/><path d="M10.3 1L5 6.7L9.3 12M5 6.7L0.8 6.5" fill="none" stroke="#e8f6ff" stroke-width="0.9"/></svg>
<div class="t" style="left:59.5px;top:206.5px;font-size:12px;line-height:16px;color:#1b1b1b;">campbell_plot_comparison.mph</div>
<div class="t" style="left:235px;top:206.5px;font-size:12px;line-height:16px;color:#1b1b1b;font-style:italic">(root)</div>
<svg class="a" style="left:43.5px;top:228.5px" width="6" height="9" viewBox="0 0 6 9"><path d="M0.6 0.6L5.4 4.5L0.6 8.4Z" fill="#fff" stroke="#777" stroke-width="1"/></svg>
<svg class="a" style="left:57px;top:225.0px" width="15" height="15" viewBox="0 0 15 15"><circle cx="7.5" cy="7.5" r="6.8" fill="#fff" stroke="#3a86c8" stroke-width="1.2"/><ellipse cx="7.5" cy="7.5" rx="3" ry="6.8" fill="none" stroke="#3a86c8" stroke-width="1"/><path d="M7.5 0.7V14.3M0.7 7.5H14.3M1.8 4H13.2M1.8 11H13.2" stroke="#3a86c8" stroke-width="1"/></svg>
<div class="t" style="left:79.5px;top:224.5px;font-size:12px;line-height:16px;color:#1b1b1b;">Global Definitions</div>
<svg class="a" style="left:43.5px;top:246.5px" width="6" height="9" viewBox="0 0 6 9"><path d="M0.6 0.6L5.4 4.5L0.6 8.4Z" fill="#fff" stroke="#777" stroke-width="1"/></svg>
<svg class="a" style="left:57px;top:243.0px" width="14" height="15" viewBox="0 0 14 15"><path d="M2 2H11.5L14.8 5V14.6H5L2 11.5Z" fill="#3a8ad0"/><path d="M2.3 2.3L5 5H14.8M5 5V14.6" fill="none" stroke="#e8f6ff" stroke-width="0.9"/></svg>
<div class="t" style="left:79.5px;top:242.5px;font-size:12px;line-height:16px;color:#1b1b1b;">Component 1</div>
<div class="t" style="left:157px;top:242.5px;font-size:12px;line-height:16px;color:#1b1b1b;font-style:italic">(comp1)</div>
<svg class="a" style="left:43.5px;top:264.5px" width="6" height="9" viewBox="0 0 6 9"><path d="M0.6 0.6L5.4 4.5L0.6 8.4Z" fill="#fff" stroke="#777" stroke-width="1"/></svg>
<svg class="a" style="left:57px;top:264.0px" width="17" height="9" viewBox="0 0 17 9"><g transform="translate(0.35 0.3) scale(0.464)"><g fill="none" stroke="#2a96b4" stroke-width="2.3" stroke-linejoin="round"><path d="M1.2 9.5Q2 4.6 4 4.6L11.2 10.9"/><circle cx="15.2" cy="11.8" r="5"/><circle cx="26.4" cy="11.5" r="4.8"/><path d="M19.1 11.6H22.6"/><path d="M19.5 6.6Q19.8 2.3 21.2 2.3L29.2 7.6"/></g></g></svg>
<div class="t" style="left:79.5px;top:260.5px;font-size:12px;line-height:16px;color:#1b1b1b;">Study: Solid Rotor</div>
<svg class="a" style="left:43.5px;top:282.5px" width="6" height="9" viewBox="0 0 6 9"><path d="M0.6 0.6L5.4 4.5L0.6 8.4Z" fill="#fff" stroke="#777" stroke-width="1"/></svg>
<svg class="a" style="left:57px;top:282.0px" width="17" height="9" viewBox="0 0 17 9"><g transform="translate(0.35 0.3) scale(0.464)"><g fill="none" stroke="#2a96b4" stroke-width="2.3" stroke-linejoin="round"><path d="M1.2 9.5Q2 4.6 4 4.6L11.2 10.9"/><circle cx="15.2" cy="11.8" r="5"/><circle cx="26.4" cy="11.5" r="4.8"/><path d="M19.1 11.6H22.6"/><path d="M19.5 6.6Q19.8 2.3 21.2 2.3L29.2 7.6"/></g></g></svg>
<div class="t" style="left:79.5px;top:278.5px;font-size:12px;line-height:16px;color:#1b1b1b;">Study: SRFF</div>
<svg class="a" style="left:43.5px;top:300.5px" width="6" height="9" viewBox="0 0 6 9"><path d="M0.6 0.6L5.4 4.5L0.6 8.4Z" fill="#fff" stroke="#777" stroke-width="1"/></svg>
<svg class="a" style="left:57px;top:300.0px" width="17" height="9" viewBox="0 0 17 9"><g transform="translate(0.35 0.3) scale(0.464)"><g fill="none" stroke="#2a96b4" stroke-width="2.3" stroke-linejoin="round"><path d="M1.2 9.5Q2 4.6 4 4.6L11.2 10.9"/><circle cx="15.2" cy="11.8" r="5"/><circle cx="26.4" cy="11.5" r="4.8"/><path d="M19.1 11.6H22.6"/><path d="M19.5 6.6Q19.8 2.3 21.2 2.3L29.2 7.6"/></g></g></svg>
<div class="t" style="left:79.5px;top:296.5px;font-size:12px;line-height:16px;color:#1b1b1b;">Study: Beam Rotor</div>
<svg class="a" style="left:43.5px;top:318.5px" width="6" height="9" viewBox="0 0 6 9"><path d="M0.6 0.6L5.4 4.5L0.6 8.4Z" fill="#fff" stroke="#777" stroke-width="1"/></svg>
<svg class="a" style="left:57px;top:315.0px" width="17" height="15" viewBox="0 0 17 15"><g transform="translate(-0.4 -0.1) scale(0.54)"><path d="M1 13.4L11.6 21.3V26.7L1 19.6Z" fill="#8c8c8c"/><rect x="4.1" y="1.2" width="15.5" height="14" fill="#fff" stroke="#8a8a8a" stroke-width="1.6"/><rect x="8.1" y="4.1" width="15.5" height="14" fill="#fff" stroke="#8a8a8a" stroke-width="1.6"/><rect x="12.5" y="7.2" width="15.1" height="14.2" fill="#e8b8e0" stroke="#8a8a8a" stroke-width="1.6"/><rect x="15" y="9.5" width="10.5" height="9" fill="#b24fa2"/><rect x="11.6" y="20.5" width="18.2" height="6.2" fill="#fff" stroke="#8a8a8a" stroke-width="1.6"/></g></svg>
<div class="t" style="left:79.5px;top:314.5px;font-size:12px;line-height:16px;color:#1b1b1b;">Results</div>
<div class="t" style="left:412px;top:156.0px;font-size:20px;line-height:24px;color:#365a88;letter-spacing:-0.55px;-webkit-text-stroke:0.5px #f8fafc">Settings</div>
<svg class="a" style="left:760px;top:164px" width="10" height="6" viewBox="0 0 10 6"><path d="M0 0H10L5 5.5Z" fill="#505050"/></svg>
<svg class="a" style="left:775.5px;top:161px" width="8" height="12" viewBox="0 0 8 12"><rect x="1.6" y="2" width="4.8" height="5.5" fill="#505050"/><rect x="0.3" y="7.3" width="7.4" height="1.5" fill="#505050"/><rect x="3.4" y="8.5" width="1.2" height="3.3" fill="#505050"/></svg>
<div class="t" style="left:411px;top:185.5px;font-size:14px;line-height:18px;color:#48688f;">Results</div>
<div class="a" style="left:405px;top:216px;width:382px;height:26px;background:#dee7f1"></div>
<svg class="a" style="left:410.5px;top:226px" width="9" height="6" viewBox="0 0 9 6"><path d="M0 0H9L4.5 5.5Z" fill="#404040"/></svg>
<div class="t" style="left:431px;top:220.5px;font-size:13px;line-height:17px;color:#1b1b1b;">Update of Results</div>
<div class="a" style="left:411px;top:252.0px;width:14px;height:13px;background:#f0f0f0;border:1px solid #8c8c8c;box-sizing:border-box"></div>
<div class="t" style="left:430px;top:250.0px;font-size:12px;line-height:16px;color:#1b1b1b;">Only plot when requested</div>
<div class="a" style="left:411px;top:273.0px;width:14px;height:13px;background:#f0f0f0;border:1px solid #8c8c8c;box-sizing:border-box"></div>
<div class="t" style="left:430px;top:271.0px;font-size:12px;line-height:16px;color:#1b1b1b;">Recompute all plot data after solving</div>
<div class="a" style="left:411px;top:294.0px;width:14px;height:13px;background:#f0f0f0;border:1px solid #8c8c8c;box-sizing:border-box"></div>
<div class="t" style="left:430px;top:292.0px;font-size:12px;line-height:16px;color:#1b1b1b;">Reevaluate all evaluation groups after solving</div>
<div class="a" style="left:405px;top:319px;width:382px;height:26px;background:#dee7f1"></div>
<svg class="a" style="left:410.5px;top:329px" width="9" height="6" viewBox="0 0 9 6"><path d="M0 0H9L4.5 5.5Z" fill="#404040"/></svg>
<div class="t" style="left:431px;top:323.5px;font-size:13px;line-height:17px;color:#1b1b1b;">Save Data in the Model</div>
<div class="t" style="left:410px;top:357.0px;font-size:12px;line-height:16px;color:#1b1b1b;">Save plot data:</div>
<div class="a" style="left:497px;top:354px;width:285px;height:21px;background:#ececec;border:1px solid #c9c9c9;border-radius:2px;box-sizing:border-box"></div>
<div class="t" style="left:510px;top:356.5px;font-size:12px;line-height:16px;color:#1b1b1b;">Automatic</div>
<svg class="a" style="left:766px;top:362px" width="9" height="5" viewBox="0 0 9 5"><path d="M0 0H9L4.5 5Z" fill="#222"/></svg>
<div class="a" style="left:794px;top:150px;width:704px;height:890px;background:linear-gradient(to bottom,#f8fafc 0px,#f8fafc 55px,#f8fbfe 90px,#e4f0fd 100%)"></div>
<div class="t" style="left:801px;top:156.0px;font-size:20px;line-height:24px;color:#365a88;letter-spacing:-0.6px;-webkit-text-stroke:0.5px #f8fafc">Graphics</div>
<svg class="a" style="left:1470px;top:164px" width="10" height="6" viewBox="0 0 10 6"><path d="M0 0H10L5 5.5Z" fill="#505050"/></svg>
<svg class="a" style="left:1485.5px;top:161px" width="8" height="12" viewBox="0 0 8 12"><rect x="1.6" y="2" width="4.8" height="5.5" fill="#505050"/><rect x="0.3" y="7.3" width="7.4" height="1.5" fill="#505050"/><rect x="3.4" y="8.5" width="1.2" height="3.3" fill="#505050"/></svg>
<svg class="a" style="left:802px;top:186px" width="14" height="13" viewBox="0 0 14 13"><circle cx="5.5" cy="5.5" r="4.6" fill="none" stroke="#3a86c8" stroke-width="1.6"/><path d="M3 5.5H8M5.5 3V8" stroke="#3a86c8" stroke-width="1.1"/><path d="M8.8 8.8L13 12.6" stroke="#3a86c8" stroke-width="2"/></svg>
<svg class="a" style="left:825px;top:186px" width="14" height="13" viewBox="0 0 14 13"><circle cx="5.5" cy="5.5" r="4.6" fill="none" stroke="#3a86c8" stroke-width="1.6"/><path d="M3 5.5H8" stroke="#3a86c8" stroke-width="1.1"/><path d="M8.8 8.8L13 12.6" stroke="#3a86c8" stroke-width="2"/></svg>
<svg class="a" style="left:847px;top:185px" width="16" height="14" viewBox="0 0 16 14"><rect x="0.5" y="5.5" width="7" height="7" fill="none" stroke="#3a86c8" stroke-dasharray="1.5 1"/><circle cx="8" cy="5" r="4.2" fill="none" stroke="#3a86c8" stroke-width="1.5"/><path d="M6 5H10M8 3V7" stroke="#3a86c8" stroke-width="1"/><path d="M11 8.5L15 12.5" stroke="#3a86c8" stroke-width="2"/></svg>
<svg class="a" style="left:869.5px;top:190px" width="6" height="4" viewBox="0 0 6 4"><path d="M0 0H6L3 3.5Z" fill="#222"/></svg>
<svg class="a" style="left:888px;top:184px" width="15" height="15" viewBox="0 0 15 15"><rect x="0.6" y="0.6" width="13.8" height="13.8" fill="none" stroke="#555" stroke-width="1.1"/><path d="M7.5 3V12M3 7.5H12" stroke="#3a86c8" stroke-width="1"/><path d="M7.5 2L5.5 4.5H9.5ZM7.5 13L5.5 10.5H9.5ZM2 7.5L4.5 5.5V9.5ZM13 7.5L10.5 5.5V9.5Z" fill="#3a86c8"/></svg>
<div class="a" style="left:911px;top:184px;width:1px;height:16px;background:#d8d8d8"></div>
<svg class="a" style="left:918px;top:185px" width="18" height="14" viewBox="0 0 18 14"><path d="M7 13V1" stroke="#3a86c8" stroke-width="1.1"/><path d="M7 0L5 3H9Z" fill="#3a86c8"/><path d="M7 13L1 8" stroke="#52a852" stroke-width="1.1"/><path d="M0 7L3 7.5L1.5 9.5Z" fill="#52a852"/><path d="M7 13L17 8" stroke="#d6306a" stroke-width="1.1"/><path d="M17.5 7.5L14.5 8L15.5 10Z" fill="#d6306a"/></svg>
<svg class="a" style="left:941.5px;top:190px" width="6" height="4" viewBox="0 0 6 4"><path d="M0 0H6L3 3.5Z" fill="#222"/></svg>
<svg class="a" style="left:960.5px;top:184px" width="15" height="16" viewBox="0 0 15 16"><path d="M1 1V14.5" fill="none" stroke="#52a852" stroke-width="0.8"/><path d="M1 -0.5L-0.3 2.2H2.3Z" fill="#52a852"/><path d="M1 14.5H13.5" stroke="#d6306a" stroke-width="0.9"/><path d="M15 14.5L13 13.3V15.7Z" fill="#d6306a"/><text x="3.2" y="9.3" font-size="10.5" fill="#8a8a8a" font-family="Liberation Sans" letter-spacing="-0.3">xy</text></svg>
<svg class="a" style="left:983.5px;top:184px" width="15" height="16" viewBox="0 0 15 16"><path d="M1 1V14.5" fill="none" stroke="#3a86c8" stroke-width="0.8"/><path d="M1 -0.5L-0.3 2.2H2.3Z" fill="#3a86c8"/><path d="M1 14.5H13.5" stroke="#52a852" stroke-width="0.9"/><path d="M15 14.5L13 13.3V15.7Z" fill="#52a852"/><text x="3.2" y="9.3" font-size="10.5" fill="#8a8a8a" font-family="Liberation Sans" letter-spacing="-0.3">yz</text></svg>
<svg class="a" style="left:1006.5px;top:184px" width="15" height="16" viewBox="0 0 15 16"><path d="M1 1V14.5" fill="none" stroke="#3a86c8" stroke-width="0.8"/><path d="M1 -0.5L-0.3 2.2H2.3Z" fill="#3a86c8"/><path d="M1 14.5H13.5" stroke="#d6306a" stroke-width="0.9"/><path d="M15 14.5L13 13.3V15.7Z" fill="#d6306a"/><text x="3.2" y="9.3" font-size="10.5" fill="#8a8a8a" font-family="Liberation Sans" letter-spacing="-0.3">xz</text></svg>
<svg class="a" style="left:1030px;top:186px" width="15" height="12" viewBox="0 0 15 12"><rect x="0" y="0" width="5.2" height="12" rx="1" fill="#3a86c8"/><path d="M5 3.2H8.5L14 0.6V11.4L8.5 8.8H5Z" fill="#cfe4f6" stroke="#3a86c8" stroke-width="1.2"/><path d="M9 3.5V8.5" stroke="#3a86c8" stroke-width="1"/></svg>
<div class="a" style="left:1052px;top:184px;width:1px;height:16px;background:#d8d8d8"></div>
<svg class="a" style="left:1060px;top:184px" width="14" height="16" viewBox="0 0 14 16"><path d="M11.3 6A5.6 5.6 0 1 1 5 4.2" fill="none" stroke="#3a86c8" stroke-width="1.2"/><path d="M7.5 0.3L12.5 3.5L8 6.2Z" fill="#3a86c8"/></svg>
<svg class="a" style="left:1081.5px;top:190px" width="6" height="4" viewBox="0 0 6 4"><path d="M0 0H6L3 3.5Z" fill="#222"/></svg>
<div class="a" style="left:1100px;top:184px;width:1px;height:16px;background:#d8d8d8"></div>
<svg class="a" style="left:1107px;top:184px" width="17" height="16" viewBox="0 0 17 16"><g fill="none" stroke="#777" stroke-width="1"><path d="M0.5 3.5H11.5V14.5H0.5Z"/><path d="M4.5 0.5H15.5V11.5H4.5Z"/><path d="M0.5 3.5L4.5 0.5M11.5 3.5L15.5 0.5M11.5 14.5L15.5 11.5M0.5 14.5L4.5 11.5"/></g><path d="M6 1L10 15" stroke="#3a86c8" stroke-width="0.9"/></svg>
<svg class="a" style="left:1129.5px;top:190px" width="6" height="4" viewBox="0 0 6 4"><path d="M0 0H6L3 3.5Z" fill="#222"/></svg>
<div class="a" style="left:1148px;top:184px;width:1px;height:16px;background:#d8d8d8"></div>
<div class="a" style="left:1154px;top:182px;width:38px;height:20px;background:#a5d3f6;border:1px solid #4a9ad8;border-radius:2px;box-sizing:border-box"></div>
<div class="a" style="left:1173px;top:184px;width:1px;height:16px;background:#3a86c8"></div>
<svg class="a" style="left:1158px;top:186px" width="12" height="12" viewBox="0 0 12 12"><path d="M0 4H3L8 0V12L3 8H0Z" fill="#3a86c8"/><path d="M9.5 4.5A2 2 0 0 1 9.5 7.5" fill="none" stroke="#3a86c8" stroke-width="1"/></svg>
<svg class="a" style="left:1178.5px;top:190px" width="6" height="4" viewBox="0 0 6 4"><path d="M0 0H6L3 3.5Z" fill="#222"/></svg>
<svg class="a" style="left:1197px;top:185px" width="16" height="13" viewBox="0 0 16 13"><g fill="none" stroke="#777" stroke-width="1"><path d="M3.5 2.5H14.5V12.5H3.5Z"/><path d="M0.5 0.5H11.5M0.5 0.5V10.5L3.5 12.5M0.5 0.5L3.5 2.5M11.5 0.5L14.5 2.5"/></g><rect x="4.5" y="3.5" width="9" height="8" fill="#d0d0f0"/></svg>
<svg class="a" style="left:1219.5px;top:190px" width="6" height="4" viewBox="0 0 6 4"><path d="M0 0H6L3 3.5Z" fill="#222"/></svg>
<div class="a" style="left:1236px;top:182px;width:20px;height:20px;background:#a5d3f6;border:1px solid #4a9ad8;border-radius:2px;box-sizing:border-box"></div>
<svg class="a" style="left:1238.5px;top:184.5px" width="15" height="15" viewBox="0 0 15 15"><rect x="0.5" y="0.5" width="14" height="14" fill="none" stroke="#666"/><rect x="2" y="2" width="11" height="11" fill="none" stroke="#666" stroke-width="0.7"/><path d="M7.5 11V4" stroke="#3a86c8"/><path d="M7.5 11L4 9" stroke="#52a852"/><path d="M7.5 11L11 8" stroke="#d6306a"/></svg>
<div class="a" style="left:1259px;top:182px;width:20px;height:20px;background:#a5d3f6;border:1px solid #4a9ad8;border-radius:2px;box-sizing:border-box"></div>
<svg class="a" style="left:1261.5px;top:184.5px" width="15" height="15" viewBox="0 0 15 15"><rect x="0.5" y="0.5" width="14" height="14" fill="none" stroke="#666"/><rect x="2" y="2" width="11" height="11" fill="none" stroke="#666" stroke-width="0.7"/><path d="M4 3.5V11.5M6.7 3.5V11.5M9.3 3.5V11.5M12 3.5V11.5M3.5 4H11.5M3.5 6.7H11.5M3.5 9.3H11.5M3.5 12H11.5" stroke="#3a86c8" stroke-width="0.9"/></svg>
<svg class="a" style="left:1284px;top:184px" width="16" height="16" viewBox="0 0 16 16"><circle cx="8" cy="8" r="7.1" fill="#3a86c8"/><path d="M10.16 8.79L7.08 17.24M8.40 10.27L-0.46 11.83M6.24 9.48L0.45 2.58M5.84 7.21L8.92 -1.24M7.60 5.73L16.46 4.17M9.76 6.52L15.55 13.42" stroke="#f8fafc" stroke-width="1.3"/><circle cx="8" cy="8" r="2.8" fill="#f8fafc"/></svg>
<svg class="a" style="left:1306.5px;top:190px" width="6" height="4" viewBox="0 0 6 4"><path d="M0 0H6L3 3.5Z" fill="#222"/></svg>
<svg class="a" style="left:1325px;top:186px" width="17" height="12" viewBox="0 0 17 12"><path d="M0 2.2H3.8L3.8 0.1H12V2.2H16V11.8H0Z" fill="#3a86c8"/><circle cx="8.4" cy="6.4" r="3.4" fill="none" stroke="#e8f6ff" stroke-width="1"/><rect x="1.2" y="3.1" width="1.6" height="1.7" fill="#e8f6ff"/></svg>
<svg class="a" style="left:1349px;top:184px" width="15" height="16" viewBox="0 0 15 16"><rect x="2.3" y="0.6" width="9.6" height="4.2" fill="#fff" stroke="#4a7ab0" stroke-width="1"/><rect x="0.5" y="4" width="13.5" height="7" rx="1.5" fill="#c6d8ee" stroke="#4a7ab0" stroke-width="1"/><rect x="2.3" y="10.5" width="9.6" height="5" fill="#fff" stroke="#4a7ab0" stroke-width="1"/><path d="M10.2 6.6H11.8" stroke="#4a7ab0" stroke-width="0.8"/></svg>
<div class="t" style="left:810px;top:217.5px;font-size:14px;line-height:18px;color:#111;letter-spacing:0.12px">fr(26)=50000 rpm Eigenfrequency=1124.1 Hz</div>
<div class="t" style="left:1108px;top:217.5px;font-size:14px;line-height:18px;color:#111;letter-spacing:-0.2px">Whirl: Displacement field</div>
<svg class="a" style="left:1474px;top:212px" width="18" height="15" viewBox="0 0 18 15"><path d="M2 3L13 1L17 4L16 13L5 14L1 11Z" fill="#f4f4f4" stroke="#ddd" stroke-width="0.8"/><rect x="3" y="3" width="13" height="9" rx="2.5" fill="#1c3a8e"/><rect x="4.5" y="4" width="6" height="7" fill="#f0e050"/><rect x="9" y="5" width="6" height="4" fill="#40a0e0"/></svg>
<svg class="a" style="left:0;top:0" width="1920" height="1077" viewBox="0 0 1920 1077">
<g stroke="#8c8c8c" stroke-width="1"><line x1="889.2" y1="672.7" x2="1341.9" y2="504.1"/><line x1="890.5" y1="694.0" x2="1341.0" y2="524.6"/><line x1="891.4" y1="715.5" x2="1340.6" y2="544.6"/><line x1="888.6" y1="659.8" x2="892.4" y2="729.3"/><line x1="994.0" y1="621.0" x2="995.7" y2="682.9"/><line x1="1094.6" y1="583.4" x2="1095.7" y2="645.2"/><line x1="1190.8" y1="548.3" x2="1191.5" y2="607.4"/><line x1="1283.8" y1="513.4" x2="1283.4" y2="576.5"/><line x1="910.6" y1="755.6" x2="1335.7" y2="588.6"/><line x1="924.5" y1="766.7" x2="1367.3" y2="591.1"/><line x1="939.4" y1="777.8" x2="1387.7" y2="598.5"/><line x1="901.0" y1="748.5" x2="945.9" y2="785.5"/><line x1="1004.6" y1="707.9" x2="1051.2" y2="743.2"/><line x1="1107.0" y1="670.0" x2="1150.0" y2="703.0"/><line x1="1202.6" y1="635.3" x2="1246.5" y2="664.9"/><line x1="1290.7" y1="596.7" x2="1339.0" y2="627.8"/><line x1="1361.4" y1="506.0" x2="1410.6" y2="534.8"/><line x1="1360.5" y1="526.0" x2="1409.6" y2="555.2"/><line x1="1359.5" y1="545.9" x2="1408.7" y2="575.6"/><line x1="1371.6" y1="498.6" x2="1368.8" y2="563.5"/><line x1="1386.8" y1="507.5" x2="1383.7" y2="572.8"/><line x1="1401.7" y1="516.2" x2="1398.5" y2="582.1"/></g>
<g fill="none" stroke="#0010d0" stroke-width="4"><path d="M1051.98 661.51A3.5 7 -22 0 0 1057.22 674.49"/><path d="M1085.44 627.13A13 25 -26 0 0 1107.36 672.07"/><path d="M1125.94 608.32A16 29 -25 0 0 1150.46 660.88"/><path d="M1169.99 599.01A12.5 22.5 -25 0 0 1189.01 639.79"/><path d="M1213.70 591.92A8 13 -27 0 0 1225.50 615.08"/><path d="M1293.52 561.81A8 12.5 -22 0 0 1302.88 584.99"/><path d="M1326.83 531.03A18 30 -19 0 0 1346.37 587.77"/></g>
<g fill="none" stroke-linecap="round">
<path d="M919.0 718.5 C938.2 711.3 994.3 691.3 1034.5 675.3 C1074.7 659.3 1122.2 636.9 1160.0 622.3 C1197.8 607.6 1230.1 597.4 1261.4 587.4 C1292.7 577.4 1333.6 566.2 1348.0 562.0" stroke="#a6ba7c" stroke-width="3.6"/>
<path d="M919.0 721.0 C932.5 714.8 980.8 691.6 1000.0 684.0 C1019.2 676.4 1025.2 676.8 1034.5 675.3 C1043.8 673.8 1048.5 674.7 1055.7 674.7 C1063.0 674.7 1069.7 675.1 1078.0 675.3 C1086.3 675.5 1097.5 676.4 1105.8 675.8 C1114.1 675.1 1121.5 673.4 1128.0 671.4 C1134.5 669.4 1139.5 666.6 1144.8 663.5 C1150.1 660.4 1153.6 657.2 1160.0 653.0 C1166.4 648.8 1173.0 644.7 1183.4 638.5 C1193.8 632.3 1212.4 622.0 1222.4 616.0 C1232.4 610.0 1236.9 607.3 1243.4 602.5 C1249.9 597.7 1254.9 592.7 1261.4 587.4 C1267.9 582.1 1275.8 576.2 1282.2 570.9 C1288.6 565.6 1293.7 561.5 1300.0 555.6 C1306.3 549.7 1311.8 545.3 1320.3 535.3 C1328.8 525.3 1346.0 502.4 1351.2 495.8" stroke="#cc9670" stroke-width="3.3"/>
<path d="M936.0 712.5 C946.7 708.9 983.6 697.2 1000.0 691.0 C1016.4 684.8 1026.2 680.4 1034.5 675.3 C1042.8 670.2 1044.6 665.3 1050.0 660.2 C1055.4 655.1 1061.3 649.6 1066.9 644.6 C1072.5 639.6 1078.0 634.2 1083.6 630.1 C1089.2 626.0 1093.8 623.6 1100.3 620.1 C1106.8 616.6 1115.2 611.8 1122.6 609.0 C1130.0 606.2 1138.6 605.0 1144.8 603.4 C1151.0 601.8 1153.8 600.5 1160.0 599.5 C1166.2 598.5 1173.3 598.7 1182.1 597.5 C1190.9 596.3 1202.6 593.8 1212.8 592.4 C1223.0 591.0 1235.3 590.1 1243.4 589.3 C1251.5 588.5 1254.6 588.1 1261.4 587.4 C1268.2 586.7 1276.2 585.6 1284.3 585.2 C1292.4 584.8 1300.6 585.2 1310.0 585.2 C1319.4 585.2 1326.0 584.0 1340.9 585.1 C1355.8 586.2 1389.6 590.9 1399.3 592.0" stroke="#1b6e1b" stroke-width="4"/>
<path d="M937.0 712.7 C947.5 708.4 983.8 693.2 1000.0 687.0 C1016.2 680.8 1021.2 680.0 1034.5 675.3 C1047.8 670.6 1059.1 666.3 1080.0 659.0 C1100.9 651.7 1129.8 643.2 1160.0 631.3 C1190.2 619.4 1236.4 598.2 1261.4 587.4 C1286.4 576.5 1286.7 576.3 1310.0 566.2 C1333.3 556.1 1385.8 533.3 1401.0 526.7" stroke="#952528" stroke-width="4"/>
<path d="M919.5 720.2L937.5 713.6" stroke="#dba87c" stroke-width="3.4"/>
<path d="M919.5 718.6L937.5 712.2" stroke="#a3bd80" stroke-width="3"/>
</g>
<g fill="none" stroke="#0010d0" stroke-width="4"><path d="M1051.98 661.51A3.5 7 -22 0 1 1057.22 674.49"/><path d="M1085.44 627.13A13 25 -26 0 1 1107.36 672.07"/><path d="M1125.94 608.32A16 29 -25 0 1 1150.46 660.88"/><path d="M1169.99 599.01A12.5 22.5 -25 0 1 1189.01 639.79"/><path d="M1213.70 591.92A8 13 -27 0 1 1225.50 615.08"/><path d="M1293.52 561.81A8 12.5 -22 0 1 1302.88 584.99"/><path d="M1326.83 531.03A18 30 -19 0 1 1346.37 587.77"/></g><g stroke="#0010d0" stroke-width="3"><line x1="966" y1="698" x2="968" y2="704"/><line x1="1009.5" y1="680" x2="1012.5" y2="689"/><line x1="1260.5" y1="584.5" x2="1262.5" y2="590"/></g>
<g font-family="Liberation Sans" font-size="13" fill="#111"><text x="1436.6" y="541.2" text-anchor="middle">0.02</text><text x="1425.4" y="562.2" text-anchor="middle">0</text><text x="1436.6" y="582.1" text-anchor="middle">-0.02</text><text x="1470.3" y="564.0" text-anchor="middle">m</text><text x="1060" y="762.6" text-anchor="middle">0.1</text><text x="1160" y="722.6" text-anchor="middle">0.2</text><text x="1256" y="683.6" text-anchor="middle">0.3</text><text x="1348.8" y="647.0" text-anchor="middle">0.4</text><text x="1203" y="736.6" text-anchor="middle">m</text><text x="915" y="784.6" text-anchor="middle">0</text><text x="953" y="804.6" text-anchor="middle">0</text><text x="888" y="819.6" text-anchor="middle">m</text></g>
</svg>
<svg class="a" style="left:812px;top:955px" width="64" height="50" viewBox="0 0 64 50">
<path d="M26 41V20" stroke="#4a86c0" stroke-width="1.6"/><path d="M26 15L23 22H29Z" fill="#4a86c0"/>
<path d="M26 41L12 31" stroke="#58a848" stroke-width="1.5"/><path d="M8 28.5L15 30L12.5 34Z" fill="#58a848"/>
<path d="M26 41L44 33" stroke="#d82060" stroke-width="1.5"/><path d="M49.5 31L42 30.5L44 35.5Z" fill="#d82060"/>
<text x="22" y="13" font-size="12" fill="#111" font-family="Liberation Sans">z</text>
<text x="0" y="27" font-size="12" fill="#111" font-family="Liberation Sans">y</text>
<text x="52" y="33" font-size="12" fill="#111" font-family="Liberation Sans">x</text>
</svg>
<div class="t" style="left:1513px;top:156.0px;font-size:20px;line-height:24px;color:#365a88;letter-spacing:-0.18px;-webkit-text-stroke:0.5px #f8fafc">Add Predefined Plot</div>
<svg class="a" style="left:1841px;top:164px" width="10" height="6" viewBox="0 0 10 6"><path d="M0 0H10L5 5.5Z" fill="#505050"/></svg>
<svg class="a" style="left:1856px;top:161px" width="8" height="12" viewBox="0 0 8 12"><rect x="1.6" y="2" width="4.8" height="5.5" fill="#505050"/><rect x="0.3" y="7.3" width="7.4" height="1.5" fill="#505050"/><rect x="3.4" y="8.5" width="1.2" height="3.3" fill="#505050"/></svg>
<svg class="a" style="left:1870px;top:162px" width="11" height="10" viewBox="0 0 11 10"><path d="M1 1L9.8 9M9.8 1L1 9" stroke="#404040" stroke-width="1.2"/></svg>
<svg class="a" style="left:1513px;top:185px" width="13" height="13" viewBox="0 0 13 13"><path d="M6.5 0V13M0 6.5H13" stroke="#3a86c8" stroke-width="1.2"/></svg>
<div class="t" style="left:1532px;top:183.5px;font-size:12px;line-height:16px;color:#1b1b1b;">Add Plot</div>
<div class="a" style="left:1510px;top:208px;width:301px;height:18px;background:#ffffff;border:1px solid #c8cbce;box-sizing:border-box"></div>
<div class="a" style="left:1819px;top:206px;width:61px;height:20px;background:#ececec;border:1px solid #c9c9c9;border-radius:2px;box-sizing:border-box"></div>
<div class="t" style="left:1550px;width:600px;text-align:center;top:207.5px;font-size:12px;line-height:16px;color:#1b1b1b;">Search</div>
<div class="a" style="left:1510px;top:232px;width:368px;height:801px;background:#ffffff;border:1px solid #d0d3d6;box-sizing:border-box"></div>
<svg class="a" style="left:1516.5px;top:237.3px" width="7" height="7" viewBox="0 0 7 7"><path d="M7 0V7H0Z" fill="#404040"/></svg>
<svg class="a" style="left:1530.5px;top:233.3px" width="17" height="17" viewBox="0 0 17 17"><path d="M1 1.5H12L16.5 4.5H5Z" fill="#c86cb8"/><path d="M4 1.5L8.5 4.5M7 1.5L11.5 4.5M10 1.5L14.5 4.5M2.5 2.5H13.5M3.5 3.5H15" stroke="#f4d0ec" stroke-width="0.5"/><path d="M1 1.5L5 4.5V16.5L1 13.5Z" fill="#f2c890"/><path d="M1 5L5 8M1 8.5L5 11.5M1 12L5 15" stroke="#fff0d8" stroke-width="0.5"/><rect x="5" y="4.5" width="11.5" height="12" fill="#c8184e"/><path d="M7.88 4.5V16.5" stroke="#fff" stroke-width="0.75"/><path d="M10.75 4.5V16.5" stroke="#fff" stroke-width="0.75"/><path d="M13.62 4.5V16.5" stroke="#fff" stroke-width="0.75"/><path d="M5 7.5H16.5" stroke="#fff" stroke-width="0.75"/><path d="M5 10.5H16.5" stroke="#fff" stroke-width="0.75"/><path d="M5 13.5H16.5" stroke="#fff" stroke-width="0.75"/></svg>
<div class="t" style="left:1553.0px;top:233.8px;font-size:12px;line-height:16px;color:#1b1b1b;letter-spacing:-0.1px">Study: Solid Rotor/Solution 1 (sol1)</div>
<svg class="a" style="left:1538.4px;top:255.8px" width="6" height="9" viewBox="0 0 6 9"><path d="M0.6 0.6L5.4 4.5L0.6 8.4Z" fill="#fff" stroke="#777" stroke-width="1"/></svg>
<svg class="a" style="left:1550.8px;top:251.3px" width="17" height="17" viewBox="0 0 17 17"><g stroke="#8a8a8a" stroke-width="0.7" fill="none"><path d="M1 1L2 4L3 1L4 4L5 1M12 1L13 4L14 1L15 4L16 1M1 13L2 16L3 13L4 16L5 13M12 13L13 16L14 13L15 16L16 13"/></g><rect x="0.8" y="6.3" width="15.4" height="4.4" rx="2.2" fill="#d8ecfa" stroke="#3a86c8" stroke-width="1.1"/><ellipse cx="8.5" cy="8.5" rx="3.2" ry="7.8" fill="#c6d8ea" stroke="#3a86c8" stroke-width="1.1"/><path d="M8.5 1.5Q10 8.5 8.5 15.5" fill="none" stroke="#8aa8c8" stroke-width="0.6"/></svg>
<div class="t" style="left:1573.2px;top:251.8px;font-size:12px;line-height:16px;color:#1b1b1b;letter-spacing:-0.1px">Solid Rotor</div>
<svg class="a" style="left:1516.5px;top:273.3px" width="7" height="7" viewBox="0 0 7 7"><path d="M7 0V7H0Z" fill="#404040"/></svg>
<svg class="a" style="left:1530.5px;top:269.3px" width="17" height="17" viewBox="0 0 17 17"><path d="M1 1.5H12L16.5 4.5H5Z" fill="#c86cb8"/><path d="M4 1.5L8.5 4.5M7 1.5L11.5 4.5M10 1.5L14.5 4.5M2.5 2.5H13.5M3.5 3.5H15" stroke="#f4d0ec" stroke-width="0.5"/><path d="M1 1.5L5 4.5V16.5L1 13.5Z" fill="#f2c890"/><path d="M1 5L5 8M1 8.5L5 11.5M1 12L5 15" stroke="#fff0d8" stroke-width="0.5"/><rect x="5" y="4.5" width="11.5" height="12" fill="#c8184e"/><path d="M7.88 4.5V16.5" stroke="#fff" stroke-width="0.75"/><path d="M10.75 4.5V16.5" stroke="#fff" stroke-width="0.75"/><path d="M13.62 4.5V16.5" stroke="#fff" stroke-width="0.75"/><path d="M5 7.5H16.5" stroke="#fff" stroke-width="0.75"/><path d="M5 10.5H16.5" stroke="#fff" stroke-width="0.75"/><path d="M5 13.5H16.5" stroke="#fff" stroke-width="0.75"/></svg>
<div class="t" style="left:1553.0px;top:269.8px;font-size:12px;line-height:16px;color:#1b1b1b;letter-spacing:-0.1px">Study: Solid Rotor/Solution Store 1 (sol2)</div>
<svg class="a" style="left:1538.4px;top:291.8px" width="6" height="9" viewBox="0 0 6 9"><path d="M0.6 0.6L5.4 4.5L0.6 8.4Z" fill="#fff" stroke="#777" stroke-width="1"/></svg>
<svg class="a" style="left:1550.8px;top:287.3px" width="17" height="17" viewBox="0 0 17 17"><g stroke="#8a8a8a" stroke-width="0.7" fill="none"><path d="M1 1L2 4L3 1L4 4L5 1M12 1L13 4L14 1L15 4L16 1M1 13L2 16L3 13L4 16L5 13M12 13L13 16L14 13L15 16L16 13"/></g><rect x="0.8" y="6.3" width="15.4" height="4.4" rx="2.2" fill="#d8ecfa" stroke="#3a86c8" stroke-width="1.1"/><ellipse cx="8.5" cy="8.5" rx="3.2" ry="7.8" fill="#c6d8ea" stroke="#3a86c8" stroke-width="1.1"/><path d="M8.5 1.5Q10 8.5 8.5 15.5" fill="none" stroke="#8aa8c8" stroke-width="0.6"/></svg>
<div class="t" style="left:1573.2px;top:287.8px;font-size:12px;line-height:16px;color:#1b1b1b;letter-spacing:-0.1px">Solid Rotor</div>
<svg class="a" style="left:1516.5px;top:309.3px" width="7" height="7" viewBox="0 0 7 7"><path d="M7 0V7H0Z" fill="#404040"/></svg>
<svg class="a" style="left:1530.5px;top:305.3px" width="17" height="17" viewBox="0 0 17 17"><path d="M1 1.5H12L16.5 4.5H5Z" fill="#c86cb8"/><path d="M4 1.5L8.5 4.5M7 1.5L11.5 4.5M10 1.5L14.5 4.5M2.5 2.5H13.5M3.5 3.5H15" stroke="#f4d0ec" stroke-width="0.5"/><path d="M1 1.5L5 4.5V16.5L1 13.5Z" fill="#f2c890"/><path d="M1 5L5 8M1 8.5L5 11.5M1 12L5 15" stroke="#fff0d8" stroke-width="0.5"/><rect x="5" y="4.5" width="11.5" height="12" fill="#c8184e"/><path d="M7.88 4.5V16.5" stroke="#fff" stroke-width="0.75"/><path d="M10.75 4.5V16.5" stroke="#fff" stroke-width="0.75"/><path d="M13.62 4.5V16.5" stroke="#fff" stroke-width="0.75"/><path d="M5 7.5H16.5" stroke="#fff" stroke-width="0.75"/><path d="M5 10.5H16.5" stroke="#fff" stroke-width="0.75"/><path d="M5 13.5H16.5" stroke="#fff" stroke-width="0.75"/></svg>
<div class="t" style="left:1553.0px;top:305.8px;font-size:12px;line-height:16px;color:#1b1b1b;letter-spacing:-0.1px">Study: Solid Rotor/Parametric Solutions 1 (sol3)</div>
<svg class="a" style="left:1537.2px;top:327.3px" width="7" height="7" viewBox="0 0 7 7"><path d="M7 0V7H0Z" fill="#404040"/></svg>
<svg class="a" style="left:1550.8px;top:323.3px" width="17" height="17" viewBox="0 0 17 17"><g stroke="#8a8a8a" stroke-width="0.7" fill="none"><path d="M1 1L2 4L3 1L4 4L5 1M12 1L13 4L14 1L15 4L16 1M1 13L2 16L3 13L4 16L5 13M12 13L13 16L14 13L15 16L16 13"/></g><rect x="0.8" y="6.3" width="15.4" height="4.4" rx="2.2" fill="#d8ecfa" stroke="#3a86c8" stroke-width="1.1"/><ellipse cx="8.5" cy="8.5" rx="3.2" ry="7.8" fill="#c6d8ea" stroke="#3a86c8" stroke-width="1.1"/><path d="M8.5 1.5Q10 8.5 8.5 15.5" fill="none" stroke="#8aa8c8" stroke-width="0.6"/></svg>
<div class="t" style="left:1573.2px;top:323.8px;font-size:12px;line-height:16px;color:#1b1b1b;letter-spacing:-0.1px">Solid Rotor</div>
<svg class="a" style="left:1570.6px;top:342.0px" width="17" height="17" viewBox="0 0 17 17"><path d="M1 1.1H11.9L16 5.2V14.9H5.2L1 10.8Z" fill="#b24fa2"/><path d="M1.3 1.4L5.2 5.2H16M5.2 5.2V14.9" fill="none" stroke="#fbe0f4" stroke-width="0.8"/></svg>
<div class="t" style="left:1593.4px;top:341.8px;font-size:12px;line-height:16px;color:#1b1b1b;letter-spacing:-0.1px">Mode Shape (rotsld)</div>
<svg class="a" style="left:1570.6px;top:360.0px" width="17" height="17" viewBox="0 0 17 17"><path d="M1 1.1H11.9L16 5.2V14.9H5.2L1 10.8Z" fill="#b24fa2"/><path d="M1.3 1.4L5.2 5.2H16M5.2 5.2V14.9" fill="none" stroke="#fbe0f4" stroke-width="0.8"/></svg>
<div class="t" style="left:1593.4px;top:359.8px;font-size:12px;line-height:16px;color:#1b1b1b;letter-spacing:-0.1px">Whirl (rotsld)</div>
<svg class="a" style="left:1570.6px;top:378.0px" width="17" height="17" viewBox="0 0 17 17"><path d="M1 1.1H11.9L16 5.2V14.9H5.2L1 10.8Z" fill="#b24fa2"/><path d="M1.3 1.4L5.2 5.2H16M5.2 5.2V14.9" fill="none" stroke="#fbe0f4" stroke-width="0.8"/></svg>
<div class="t" style="left:1593.4px;top:377.8px;font-size:12px;line-height:16px;color:#1b1b1b;letter-spacing:-0.1px">Modal Stress (rotsld)</div>
<svg class="a" style="left:1571.1px;top:395.3px" width="17" height="17" viewBox="0 0 17 17"><path d="M1 9.5Q4 3 7.5 7.5T15.5 7.5" fill="none" stroke="#c060b0" stroke-width="1.1"/></svg>
<div class="t" style="left:1593.4px;top:395.8px;font-size:12px;line-height:16px;color:#1b1b1b;letter-spacing:-0.1px">Campbell Plot, Rotating Frame (rotsld)</div>
<svg class="a" style="left:1571.1px;top:413.3px" width="17" height="17" viewBox="0 0 17 17"><path d="M1 9.5Q4 3 7.5 7.5T15.5 7.5" fill="none" stroke="#c060b0" stroke-width="1.1"/></svg>
<div class="t" style="left:1593.4px;top:413.8px;font-size:12px;line-height:16px;color:#1b1b1b;letter-spacing:-0.1px">Campbell Plot, Fixed Frame (rotsld)</div>
<svg class="a" style="left:1571.1px;top:431.3px" width="17" height="17" viewBox="0 0 17 17"><path d="M0.5 12L3 15.5H16V13H3Z" fill="#aaa" stroke="#888" stroke-width="0.8"/><rect x="2.5" y="0.5" width="10" height="10" fill="#fff" stroke="#888" stroke-width="0.9"/><rect x="4.5" y="2.5" width="10" height="10" fill="#fff" stroke="#888" stroke-width="0.9"/><rect x="6" y="4" width="10" height="10" fill="#fff" stroke="#888" stroke-width="0.9"/><text x="8" y="12" font-size="6" fill="#c050ae" font-family="Liberation Sans">81</text></svg>
<div class="t" style="left:1593.4px;top:431.8px;font-size:12px;line-height:16px;color:#1b1b1b;letter-spacing:-0.1px">Eigenfrequencies (Study: Solid Rotor)</div>
<svg class="a" style="left:1516.5px;top:453.3px" width="7" height="7" viewBox="0 0 7 7"><path d="M7 0V7H0Z" fill="#404040"/></svg>
<svg class="a" style="left:1530.5px;top:449.3px" width="17" height="17" viewBox="0 0 17 17"><path d="M1 1.5H12L16.5 4.5H5Z" fill="#c86cb8"/><path d="M4 1.5L8.5 4.5M7 1.5L11.5 4.5M10 1.5L14.5 4.5M2.5 2.5H13.5M3.5 3.5H15" stroke="#f4d0ec" stroke-width="0.5"/><path d="M1 1.5L5 4.5V16.5L1 13.5Z" fill="#f2c890"/><path d="M1 5L5 8M1 8.5L5 11.5M1 12L5 15" stroke="#fff0d8" stroke-width="0.5"/><rect x="5" y="4.5" width="11.5" height="12" fill="#c8184e"/><path d="M7.88 4.5V16.5" stroke="#fff" stroke-width="0.75"/><path d="M10.75 4.5V16.5" stroke="#fff" stroke-width="0.75"/><path d="M13.62 4.5V16.5" stroke="#fff" stroke-width="0.75"/><path d="M5 7.5H16.5" stroke="#fff" stroke-width="0.75"/><path d="M5 10.5H16.5" stroke="#fff" stroke-width="0.75"/><path d="M5 13.5H16.5" stroke="#fff" stroke-width="0.75"/></svg>
<div class="t" style="left:1553.0px;top:449.8px;font-size:12px;line-height:16px;color:#1b1b1b;letter-spacing:-0.1px">Study: SRFF/Solution 30 (sol30)</div>
<svg class="a" style="left:1538.4px;top:471.8px" width="6" height="9" viewBox="0 0 6 9"><path d="M0.6 0.6L5.4 4.5L0.6 8.4Z" fill="#fff" stroke="#777" stroke-width="1"/></svg>
<svg class="a" style="left:1550.8px;top:467.3px" width="17" height="17" viewBox="0 0 17 17"><g stroke="#8a8a8a" stroke-width="0.7" fill="none"><path d="M1 1L2 4L3 1L4 4L5 1M12 1L13 4L14 1L15 4L16 1M1 13L2 16L3 13L4 16L5 13M12 13L13 16L14 13L15 16L16 13"/></g><rect x="0.8" y="6.3" width="15.4" height="4.4" rx="2.2" fill="#d8ecfa" stroke="#3a86c8" stroke-width="1.1"/><ellipse cx="8.5" cy="8.5" rx="3.2" ry="7.8" fill="#c6d8ea" stroke="#3a86c8" stroke-width="1.1"/><path d="M8.5 1.5Q10 8.5 8.5 15.5" fill="none" stroke="#8aa8c8" stroke-width="0.6"/></svg>
<div class="t" style="left:1573.2px;top:467.8px;font-size:12px;line-height:16px;color:#1b1b1b;letter-spacing:-0.1px">Solid Rotor, Fixed Frame</div>
<svg class="a" style="left:1516.5px;top:489.3px" width="7" height="7" viewBox="0 0 7 7"><path d="M7 0V7H0Z" fill="#404040"/></svg>
<svg class="a" style="left:1530.5px;top:485.3px" width="17" height="17" viewBox="0 0 17 17"><path d="M1 1.5H12L16.5 4.5H5Z" fill="#c86cb8"/><path d="M4 1.5L8.5 4.5M7 1.5L11.5 4.5M10 1.5L14.5 4.5M2.5 2.5H13.5M3.5 3.5H15" stroke="#f4d0ec" stroke-width="0.5"/><path d="M1 1.5L5 4.5V16.5L1 13.5Z" fill="#f2c890"/><path d="M1 5L5 8M1 8.5L5 11.5M1 12L5 15" stroke="#fff0d8" stroke-width="0.5"/><rect x="5" y="4.5" width="11.5" height="12" fill="#c8184e"/><path d="M7.88 4.5V16.5" stroke="#fff" stroke-width="0.75"/><path d="M10.75 4.5V16.5" stroke="#fff" stroke-width="0.75"/><path d="M13.62 4.5V16.5" stroke="#fff" stroke-width="0.75"/><path d="M5 7.5H16.5" stroke="#fff" stroke-width="0.75"/><path d="M5 10.5H16.5" stroke="#fff" stroke-width="0.75"/><path d="M5 13.5H16.5" stroke="#fff" stroke-width="0.75"/></svg>
<div class="t" style="left:1553.0px;top:485.8px;font-size:12px;line-height:16px;color:#1b1b1b;letter-spacing:-0.1px">Study: SRFF/Solution Store 2 (sol31)</div>
<svg class="a" style="left:1538.4px;top:507.8px" width="6" height="9" viewBox="0 0 6 9"><path d="M0.6 0.6L5.4 4.5L0.6 8.4Z" fill="#fff" stroke="#777" stroke-width="1"/></svg>
<svg class="a" style="left:1550.8px;top:503.3px" width="17" height="17" viewBox="0 0 17 17"><g stroke="#8a8a8a" stroke-width="0.7" fill="none"><path d="M1 1L2 4L3 1L4 4L5 1M12 1L13 4L14 1L15 4L16 1M1 13L2 16L3 13L4 16L5 13M12 13L13 16L14 13L15 16L16 13"/></g><rect x="0.8" y="6.3" width="15.4" height="4.4" rx="2.2" fill="#d8ecfa" stroke="#3a86c8" stroke-width="1.1"/><ellipse cx="8.5" cy="8.5" rx="3.2" ry="7.8" fill="#c6d8ea" stroke="#3a86c8" stroke-width="1.1"/><path d="M8.5 1.5Q10 8.5 8.5 15.5" fill="none" stroke="#8aa8c8" stroke-width="0.6"/></svg>
<div class="t" style="left:1573.2px;top:503.8px;font-size:12px;line-height:16px;color:#1b1b1b;letter-spacing:-0.1px">Solid Rotor, Fixed Frame</div>
<svg class="a" style="left:1516.5px;top:525.3px" width="7" height="7" viewBox="0 0 7 7"><path d="M7 0V7H0Z" fill="#404040"/></svg>
<svg class="a" style="left:1530.5px;top:521.3px" width="17" height="17" viewBox="0 0 17 17"><path d="M1 1.5H12L16.5 4.5H5Z" fill="#c86cb8"/><path d="M4 1.5L8.5 4.5M7 1.5L11.5 4.5M10 1.5L14.5 4.5M2.5 2.5H13.5M3.5 3.5H15" stroke="#f4d0ec" stroke-width="0.5"/><path d="M1 1.5L5 4.5V16.5L1 13.5Z" fill="#f2c890"/><path d="M1 5L5 8M1 8.5L5 11.5M1 12L5 15" stroke="#fff0d8" stroke-width="0.5"/><rect x="5" y="4.5" width="11.5" height="12" fill="#c8184e"/><path d="M7.88 4.5V16.5" stroke="#fff" stroke-width="0.75"/><path d="M10.75 4.5V16.5" stroke="#fff" stroke-width="0.75"/><path d="M13.62 4.5V16.5" stroke="#fff" stroke-width="0.75"/><path d="M5 7.5H16.5" stroke="#fff" stroke-width="0.75"/><path d="M5 10.5H16.5" stroke="#fff" stroke-width="0.75"/><path d="M5 13.5H16.5" stroke="#fff" stroke-width="0.75"/></svg>
<div class="t" style="left:1553.0px;top:521.8px;font-size:12px;line-height:16px;color:#1b1b1b;letter-spacing:-0.1px">Study: SRFF/Parametric Solutions 2 (sol32)</div>
<svg class="a" style="left:1538.4px;top:543.8px" width="6" height="9" viewBox="0 0 6 9"><path d="M0.6 0.6L5.4 4.5L0.6 8.4Z" fill="#fff" stroke="#777" stroke-width="1"/></svg>
<svg class="a" style="left:1550.8px;top:539.3px" width="17" height="17" viewBox="0 0 17 17"><g stroke="#8a8a8a" stroke-width="0.7" fill="none"><path d="M1 1L2 4L3 1L4 4L5 1M12 1L13 4L14 1L15 4L16 1M1 13L2 16L3 13L4 16L5 13M12 13L13 16L14 13L15 16L16 13"/></g><rect x="0.8" y="6.3" width="15.4" height="4.4" rx="2.2" fill="#d8ecfa" stroke="#3a86c8" stroke-width="1.1"/><ellipse cx="8.5" cy="8.5" rx="3.2" ry="7.8" fill="#c6d8ea" stroke="#3a86c8" stroke-width="1.1"/><path d="M8.5 1.5Q10 8.5 8.5 15.5" fill="none" stroke="#8aa8c8" stroke-width="0.6"/></svg>
<div class="t" style="left:1573.2px;top:539.8px;font-size:12px;line-height:16px;color:#1b1b1b;letter-spacing:-0.1px">Solid Rotor, Fixed Frame</div>
<svg class="a" style="left:1516.5px;top:561.3px" width="7" height="7" viewBox="0 0 7 7"><path d="M7 0V7H0Z" fill="#404040"/></svg>
<svg class="a" style="left:1530.5px;top:557.3px" width="17" height="17" viewBox="0 0 17 17"><path d="M1 1.5H12L16.5 4.5H5Z" fill="#c86cb8"/><path d="M4 1.5L8.5 4.5M7 1.5L11.5 4.5M10 1.5L14.5 4.5M2.5 2.5H13.5M3.5 3.5H15" stroke="#f4d0ec" stroke-width="0.5"/><path d="M1 1.5L5 4.5V16.5L1 13.5Z" fill="#f2c890"/><path d="M1 5L5 8M1 8.5L5 11.5M1 12L5 15" stroke="#fff0d8" stroke-width="0.5"/><rect x="5" y="4.5" width="11.5" height="12" fill="#c8184e"/><path d="M7.88 4.5V16.5" stroke="#fff" stroke-width="0.75"/><path d="M10.75 4.5V16.5" stroke="#fff" stroke-width="0.75"/><path d="M13.62 4.5V16.5" stroke="#fff" stroke-width="0.75"/><path d="M5 7.5H16.5" stroke="#fff" stroke-width="0.75"/><path d="M5 10.5H16.5" stroke="#fff" stroke-width="0.75"/><path d="M5 13.5H16.5" stroke="#fff" stroke-width="0.75"/></svg>
<div class="t" style="left:1553.0px;top:557.8px;font-size:12px;line-height:16px;color:#1b1b1b;letter-spacing:-0.1px">Study: Beam Rotor/Solution 59 (sol59)</div>
<svg class="a" style="left:1538.4px;top:579.8px" width="6" height="9" viewBox="0 0 6 9"><path d="M0.6 0.6L5.4 4.5L0.6 8.4Z" fill="#fff" stroke="#777" stroke-width="1"/></svg>
<svg class="a" style="left:1550.8px;top:575.3px" width="17" height="17" viewBox="0 0 17 17"><g stroke="#8a8a8a" stroke-width="0.7" fill="none"><path d="M1 1L2 4L3 1L4 4L5 1M12 1L13 4L14 1L15 4L16 1M1 13L2 16L3 13L4 16L5 13M12 13L13 16L14 13L15 16L16 13"/></g><path d="M0.5 8.5H16.5" stroke="#3a86c8" stroke-width="1.6"/><rect x="7" y="0.8" width="3" height="15.4" fill="#d8ecfa" stroke="#3a86c8" stroke-width="1"/></svg>
<div class="t" style="left:1573.2px;top:575.8px;font-size:12px;line-height:16px;color:#1b1b1b;letter-spacing:-0.1px">Beam Rotor</div>
<svg class="a" style="left:1516.5px;top:597.3px" width="7" height="7" viewBox="0 0 7 7"><path d="M7 0V7H0Z" fill="#404040"/></svg>
<svg class="a" style="left:1530.5px;top:593.3px" width="17" height="17" viewBox="0 0 17 17"><path d="M1 1.5H12L16.5 4.5H5Z" fill="#c86cb8"/><path d="M4 1.5L8.5 4.5M7 1.5L11.5 4.5M10 1.5L14.5 4.5M2.5 2.5H13.5M3.5 3.5H15" stroke="#f4d0ec" stroke-width="0.5"/><path d="M1 1.5L5 4.5V16.5L1 13.5Z" fill="#f2c890"/><path d="M1 5L5 8M1 8.5L5 11.5M1 12L5 15" stroke="#fff0d8" stroke-width="0.5"/><rect x="5" y="4.5" width="11.5" height="12" fill="#c8184e"/><path d="M7.88 4.5V16.5" stroke="#fff" stroke-width="0.75"/><path d="M10.75 4.5V16.5" stroke="#fff" stroke-width="0.75"/><path d="M13.62 4.5V16.5" stroke="#fff" stroke-width="0.75"/><path d="M5 7.5H16.5" stroke="#fff" stroke-width="0.75"/><path d="M5 10.5H16.5" stroke="#fff" stroke-width="0.75"/><path d="M5 13.5H16.5" stroke="#fff" stroke-width="0.75"/></svg>
<div class="t" style="left:1553.0px;top:593.8px;font-size:12px;line-height:16px;color:#1b1b1b;letter-spacing:-0.1px">Study: Beam Rotor/Parametric Solutions 3 (sol60)</div>
<svg class="a" style="left:1538.4px;top:615.8px" width="6" height="9" viewBox="0 0 6 9"><path d="M0.6 0.6L5.4 4.5L0.6 8.4Z" fill="#fff" stroke="#777" stroke-width="1"/></svg>
<svg class="a" style="left:1550.8px;top:611.3px" width="17" height="17" viewBox="0 0 17 17"><g stroke="#8a8a8a" stroke-width="0.7" fill="none"><path d="M1 1L2 4L3 1L4 4L5 1M12 1L13 4L14 1L15 4L16 1M1 13L2 16L3 13L4 16L5 13M12 13L13 16L14 13L15 16L16 13"/></g><path d="M0.5 8.5H16.5" stroke="#3a86c8" stroke-width="1.6"/><rect x="7" y="0.8" width="3" height="15.4" fill="#d8ecfa" stroke="#3a86c8" stroke-width="1"/></svg>
<div class="t" style="left:1573.2px;top:611.8px;font-size:12px;line-height:16px;color:#1b1b1b;letter-spacing:-0.1px">Beam Rotor</div>
<div class="t" style="left:1906px;top:155px;transform-origin:0 0;transform:rotate(90deg);font-size:11.4px;line-height:12px;color:#30609c">Messages</div>
<div class="t" style="left:1906px;top:218px;transform-origin:0 0;transform:rotate(90deg);font-size:11.4px;line-height:12px;color:#30609c">Progress</div>
<div class="t" style="left:1906px;top:275px;transform-origin:0 0;transform:rotate(90deg);font-size:12px;line-height:12px;color:#30609c">Log</div>
</body></html>
